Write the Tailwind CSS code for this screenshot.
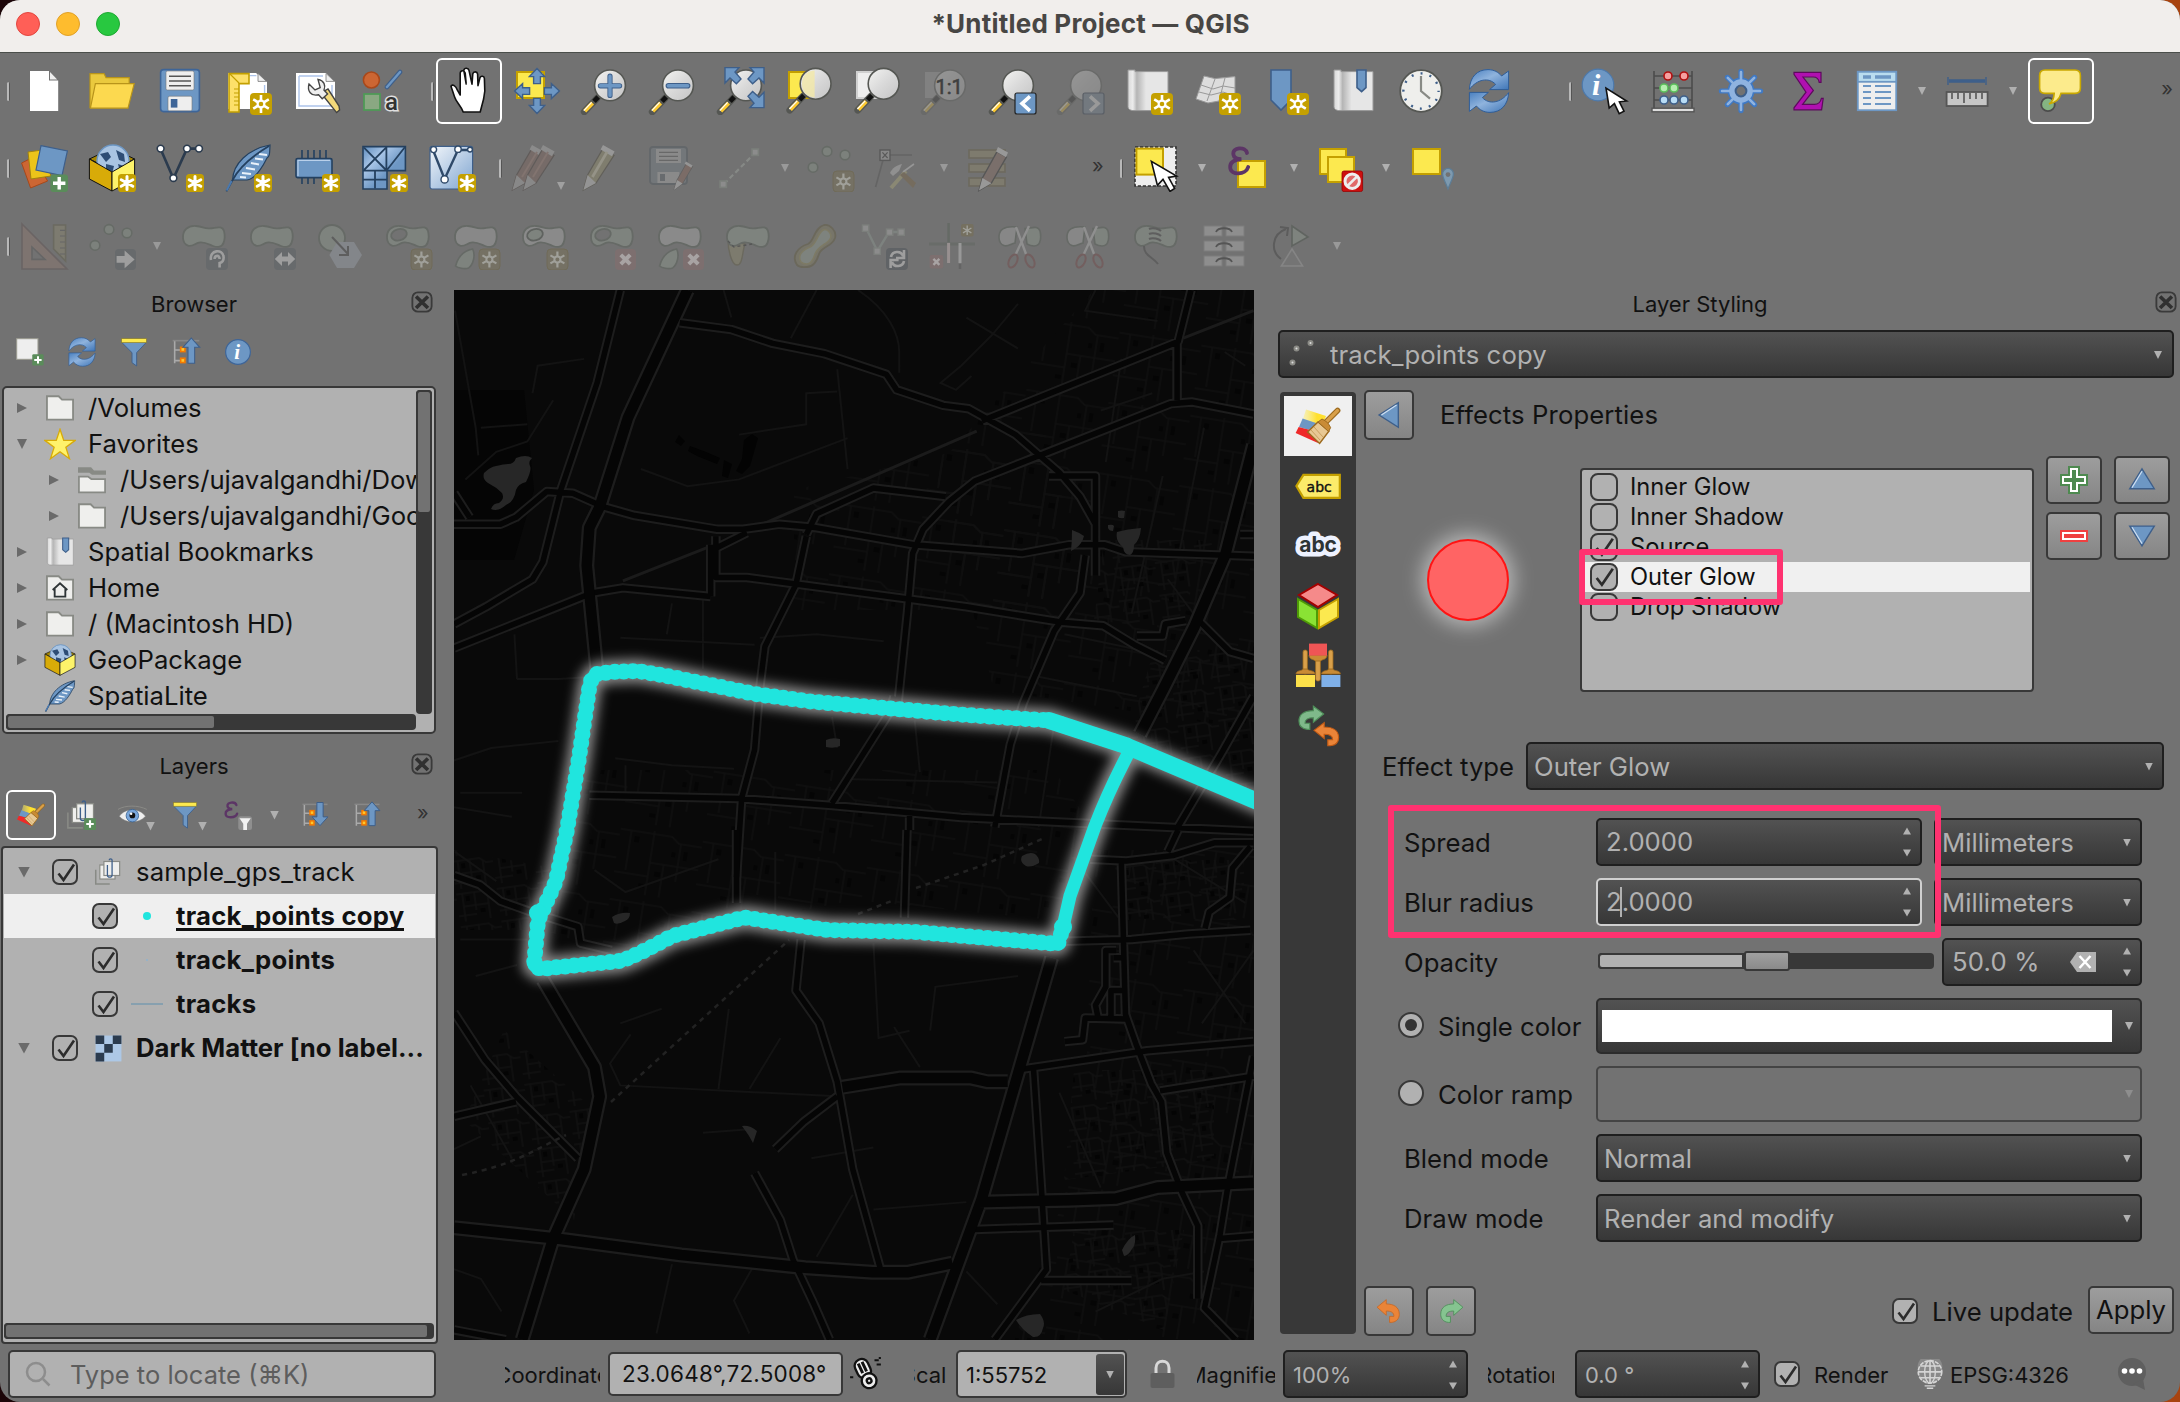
<!DOCTYPE html>
<html lang="en">
<head>
<meta charset="utf-8">
<title>QGIS</title>
<script src="https://cdn.jsdelivr.net/npm/@tailwindcss/browser@4"></script>
</head>
<body class="w-[2180px] h-[1402px] overflow-hidden bg-[linear-gradient(90deg,#1c0508_50%,#a8430f_50%)]">

<!-- Icon library -->
<svg class="absolute w-0 h-0" aria-hidden="true">
  <defs>
    <linearGradient id="gLens" x1="0" y1="0" x2="1" y2="1"><stop offset="0" stop-color="#f4f4f2"/><stop offset=".5" stop-color="#d9d9d9"/><stop offset="1" stop-color="#c4c4c4"/></linearGradient>
    <linearGradient id="gBlue" x1="0" y1="0" x2="1" y2="1"><stop offset="0" stop-color="#4a80c0"/><stop offset=".45" stop-color="#8fb3dd"/><stop offset="1" stop-color="#3f76b8"/></linearGradient>
    <linearGradient id="gPale" x1="0" y1="0" x2="1" y2="1"><stop offset="0" stop-color="#f2f6fa"/><stop offset="1" stop-color="#7fa5d0"/></linearGradient>
    <linearGradient id="gRoll" x1="0" y1="0" x2="1" y2="0"><stop offset="0" stop-color="#d8d8d8"/><stop offset=".12" stop-color="#ececec"/><stop offset=".22" stop-color="#b5b5b5"/><stop offset=".45" stop-color="#e6e6e6"/><stop offset="1" stop-color="#e6e6e6"/></linearGradient>
    <linearGradient id="gFlag" x1="0" y1="0" x2="1" y2="0"><stop offset="0" stop-color="#ffef6a" stop-opacity=".4"/><stop offset=".6" stop-color="#ffe02e"/></linearGradient>
    <linearGradient id="gMesh" x1="0" y1="0" x2="1" y2="1"><stop offset="0" stop-color="#5f8cbd"/><stop offset=".3" stop-color="#a9c6e8"/><stop offset=".6" stop-color="#6d97c4"/><stop offset="1" stop-color="#6d97c4"/></linearGradient>

    <g id="star"><rect x="13" y="13" width="11" height="11" rx="2" fill="#c4a000"/><path d="M18.500 14v9M14.600 16.200l7.800 4.600M14.600 20.800l7.800-4.600" stroke="#fff" stroke-width="1.300"/><circle cx="18.500" cy="18.500" r="1.700" fill="#c4a000" stroke="#fff" stroke-width="1.100"/></g>
    <g id="starS"><rect x="15" y="15" width="9" height="9" rx="1.800" fill="#c4a000"/><path d="M19.500 16.300v6.400M16.600 17.900l5.800 3.200M16.600 21.100l5.800-3.200" stroke="#fff" stroke-width="1.500" stroke-linecap="round"/></g>
    <g id="glass"><path d="M8.200 15.400L1.600 22.400" stroke="#555753" stroke-width="3.400" stroke-linecap="round"/><path d="M8.600 15L6.500 17.200" stroke="#111" stroke-width="2.400"/><path d="M5.800 18L1.900 22.100" stroke="#fcc92f" stroke-width="2"/><path d="M5.300 17.700L1.400 21.800" stroke="#fff" stroke-width=".6"/><circle cx="14.500" cy="9.200" r="7.700" fill="url(#gLens)" stroke="#555753" stroke-width=".8"/></g>
    <g id="cursor"><path d="M12.500 10.500l1.600 10 2.600-2.200 2.400 5 2.400-1.200-2.300-4.700 3.600-.4z" fill="#fff" stroke="#111" stroke-width=".8"/></g>

    <symbol id="new" viewBox="0 0 24 24"><path d="M5 2h9.500v4.700h4.600V22H5z" fill="#fff"/><path d="M15 2.500l3.600 3.700H15z" fill="#eee"/></symbol>
    <symbol id="open" viewBox="0 0 24 24"><path d="M1 20.500V3.300h7l1 2h11.600v3" fill="#eac93e" stroke="#b8941a" stroke-width=".6"/><path d="M3.700 8.300h19.400L20 20.600H1.200z" fill="#fcd94f" stroke="#b8941a" stroke-width=".6"/></symbol>
    <symbol id="save" viewBox="0 0 24 24"><rect x="2.300" y="1.300" width="19.400" height="21" rx="1.500" fill="#6d97c4" stroke="#3e6598" stroke-width=".8"/><rect x="5" y="2" width="14" height="9.500" rx=".8" fill="#eee" stroke="#777" stroke-width=".3"/><path d="M6.500 4.600h11M6.500 7h11M6.500 9.400h11" stroke="#555" stroke-width=".8"/><rect x="6" y="14.600" width="12" height="7.300" rx=".8" fill="#eee" stroke="#777" stroke-width=".3"/><rect x="7.400" y="16" width="3.300" height="4.300" fill="#3e6598"/></symbol>
    <symbol id="newlayout" viewBox="0 0 24 24"><path d="M2 3h14l5.500 4.500V21H2z" fill="#fff"/><path d="M9 4.300h7.200M20.300 9v8" stroke="#adc4ea" stroke-width=".7"/><path d="M17 3.200l4.200 4H17z" fill="#eee" stroke="#777" stroke-width=".4"/><path d="M2.500 3.300h10v5H7.500V22.500h-5z" fill="#fde06a" stroke="#c4a000" stroke-width=".8"/><path d="M5 11h2.500M5 13h2.500M5 15h2.500M5 17h2.500M5 19h2.500M3 3.500l4.500 4.500" stroke="#c4a000" stroke-width=".6"/><use href="#star"/></symbol>
    <symbol id="manager" viewBox="0 0 24 24"><path d="M2 3h15l4.500 4.500V21H2z" fill="#fff"/><path d="M3.500 4.500h12M3.500 4.500v15h16.500V9" fill="none" stroke="#adc4ea" stroke-width=".7"/><path d="M17 3.200l4.200 4H17z" fill="#eee" stroke="#777" stroke-width=".4"/><path d="M14.500 13l7.800 9.800 1.500-1.300-.3-2-5.500-8.500z" fill="#f3d97a" stroke="#444" stroke-width=".7"/><path d="M8.500 8.500l3 3 2.600-1.200L13 6.200c3 .5 4 3 3 5.300l1.800 2-2.700 2.400-1.800-2C9.500 14.800 7.500 12 8.500 8.500z" fill="#eee" stroke="#444" stroke-width=".7"/></symbol>
    <symbol id="style" viewBox="0 0 24 24"><circle cx="5.700" cy="6.500" r="4" fill="#cc6633" stroke="#a8481a" stroke-width=".8"/><path d="M13.500 10l6.500-7.500" stroke="#3e5f8a" stroke-width="2.400" stroke-linecap="round"/><path d="M13.500 10l6.500-7.500" stroke="#6d97c4" stroke-width="1.200" stroke-linecap="round"/><rect x="2" y="13.500" width="8" height="8" fill="#8aa882" stroke="#4f9a57" stroke-width=".9"/><text x="12.500" y="21.500" font-family="Roboto" font-size="12" font-weight="500" fill="#333" stroke="#e0e0e0" stroke-width="1.500" paint-order="stroke">a</text></symbol>
    <symbol id="hand" viewBox="0 0 24 24"><path d="M8.500 22.500c-1-3-3.600-5-4.300-7.500L2.400 9.600c.8-1.300 2.400-.2 3.200 2L7 14V3c.2-1.400 2-1.500 2.500 0L10 8.500 8.800 1.700c.3-1.500 2.300-1.300 2.600 0L12.900 8.600l.4-5.200c.4-1.400 2.200-1.200 2.400.1l.2 5.800 1-4c.5-1.100 2.200-.8 2.200.5l.2 6.200-.6 4-1.700 6.500z" transform="translate(.6 0)" fill="#fff" stroke="#111" stroke-width=".8" stroke-linejoin="round"/></symbol>
    <symbol id="pan" viewBox="0 0 24 24"><rect x="2" y="2.500" width="13.500" height="13" fill="#fce94f" stroke="#c4a000"/><path d="M12 .8l3.800 4h-2.100v3.500h-3.400V4.800H8.200zM12 23.200l-3.800-4h2.100v-3.500h3.400v3.500h2.100zM.8 12l4-3.700v2.100h3.500v3.300H4.800v2.100zM23.200 12l-4-3.700v2.100h-3.500v3.300h3.500v2.100z" fill="#6d97c4" stroke="#3e5f8a" stroke-width=".7"/></symbol>
    <symbol id="zoomin" viewBox="0 0 24 24"><use href="#glass"/><path d="M14.500 4.600v9.600M9.700 9.400h9.600" stroke="#3e5f8a" stroke-width="2.600" stroke-linecap="round"/><path d="M14.500 4.600v9.600M9.700 9.400h9.600" stroke="#6d97c4" stroke-width="1.700" stroke-linecap="round"/></symbol>
    <symbol id="zoomout" viewBox="0 0 24 24"><use href="#glass"/><path d="M9.700 9.400h9.600" stroke="#3e5f8a" stroke-width="2.800" stroke-linecap="round"/><path d="M9.700 9.400h9.600" stroke="#6d97c4" stroke-width="1.700" stroke-linecap="round"/></symbol>
    <symbol id="zoomfull" viewBox="0 0 24 24"><use href="#glass"/><path d="M4 .3h7L9 2.500l3 3.500-2.300 2.400L6.500 5.500 4 8zM23.500.3h-7l2 2.200-3 3.500 2.300 2.400L21 5.500 23.500 8zM23.500 20.300h-7l2-2.200-3-3.500 2.300-2.400 3.200 2.900 2.500-2.500z" fill="#6d97c4" stroke="#3e5f8a" stroke-width=".7"/></symbol>
    <symbol id="zoomsel" viewBox="0 0 24 24"><rect x="2" y="2.500" width="12" height="13" fill="#fce94f" stroke="#c4a000"/><g transform="translate(.8 -.8)"><use href="#glass"/><path d="M14 2.500V16c-4.500-.2-6.300-3.500-6.300-6.800S9.500 2.700 14 2.500z" fill="#f2e8a8" opacity=".8"/></g></symbol>
    <symbol id="zoomlayer" viewBox="0 0 24 24"><rect x="2" y="2.500" width="12" height="13" fill="#eee" stroke="#d0d0d0"/><g transform="translate(.8 -.8)"><use href="#glass"/></g></symbol>
    <symbol id="zoomnative" viewBox="0 0 24 24"><g opacity=".28"><rect x="2" y="2.500" width="10" height="13" fill="#aaa"/><use href="#glass"/></g><text x="7.200" y="13.300" font-family="Roboto" font-size="10" fill="#3f3f3f" stroke="#3f3f3f" stroke-width=".3">1:1</text></symbol>
    <symbol id="zoomlast" viewBox="0 0 24 24"><use href="#glass"/><rect x="13" y="13" width="10.500" height="10.500" rx="1" fill="#6d97c4" stroke="#222" stroke-width=".6"/><path d="M20.500 14.700l-4 3.600 4 3.600" fill="none" stroke="#fff" stroke-width="1.800"/></symbol>
    <symbol id="zoomnext" viewBox="0 0 24 24"><g opacity=".28"><use href="#glass"/></g><rect x="13" y="13" width="10.500" height="10.500" rx="1" fill="#73797f" stroke="#5a5f66" stroke-width=".6"/><path d="M16.500 14.700l4 3.600-4 3.600" fill="none" stroke="#999" stroke-width="1.800"/></symbol>
    <symbol id="newmap" viewBox="0 0 24 24"><path d="M1.500 1.500h3.500v.8h16.500v19.500H4.500c-2 0-3-.8-3-2z" fill="url(#gRoll)" stroke="#999" stroke-width=".5"/><use href="#star"/></symbol>
    <symbol id="new3d" viewBox="0 0 24 24"><path d="M5.500 4.500l5.500 1.300 10-1V19l-8-2-5.500 1-6-2z" fill="#ddd" stroke="#999" stroke-width=".5"/><path d="M4 9l6 2 5-1.500 6 1M3 12.500l6 1.500 6-1.500 6 2M11 6l-4 11M16 5.500L13 17" fill="none" stroke="#999" stroke-width=".5"/><use href="#star"/></symbol>
    <symbol id="newbm" viewBox="0 0 24 24"><path d="M5 1.500h10v15l-5 5-5-5z" fill="#6d97c4" stroke="#3e5f8a" stroke-width=".8"/><use href="#star"/></symbol>
    <symbol id="bms" viewBox="0 0 24 24"><path d="M2.500 1.500H6v.8h16v19.500H5.500c-2 0-3-.8-3-2z" fill="url(#gRoll)" stroke="#999" stroke-width=".5"/><path d="M14 1.500h4.500v8.800l-2.200 2-2.300-2z" fill="#6d97c4" stroke="#3e5f8a" stroke-width=".8"/></symbol>
    <symbol id="clock" viewBox="0 0 24 24"><circle cx="12" cy="12" r="10.400" fill="#efefec" stroke="#555753" stroke-width=".9"/><circle cx="12" cy="12" r="8.800" fill="none" stroke="#3e5f8a" stroke-width="1.200" stroke-dasharray="1 3.608" stroke-dashoffset=".5"/><path d="M12 4.500V12l4.500 3.800" fill="none" stroke="#888a85" stroke-width="1.100"/></symbol>
    <symbol id="refresh" viewBox="0 0 24 24"><path d="M2.200 11.200C2.500 5 6 1.300 11.500 1.300c3 0 5.200 1.300 6.800 3.200l3.500-2.500v9.300h-9.500l3-2.600C12 5 6 6 2.200 11.200z" fill="url(#gBlue)" stroke="#2f5d98" stroke-width=".5"/><path d="M21.800 12.800C21.500 19 18 22.700 12.500 22.700c-3 0-5.200-1.300-6.800-3.200l-3.500 2.700v-9.500h9.500l-3 2.600c3.300 3.700 9.300 2.700 13.100-2.500z" fill="url(#gBlue)" stroke="#2f5d98" stroke-width=".5"/></symbol>
    <symbol id="info" viewBox="0 0 24 24"><circle cx="12" cy="12" r="10.600" fill="#6d97c4" stroke="#3e6598" stroke-width="1"/><text x="8.800" y="18" font-family="Liberation Serif" font-style="italic" font-weight="bold" font-size="18" fill="#fff">i</text></symbol>
    <symbol id="identify" viewBox="0 0 24 24"><circle cx="8.500" cy="9" r="7.900" fill="#6d97c4" stroke="#4d79ab" stroke-width=".6"/><text x="5.500" y="14" font-family="Liberation Serif" font-style="italic" font-weight="bold" font-size="15" fill="#fff">i</text><use href="#cursor"/></symbol>
    <symbol id="abacus" viewBox="0 0 24 24"><path d="M2.500 2v18.500M21.500 2v18.500M2.500 4.500h19M2.500 10.500h19M2.500 16.500h19" stroke="#4c4c4c" stroke-width=".8"/><rect x="1.500" y="20.600" width="21" height="1.800" fill="#ddd" stroke="#555" stroke-width=".7"/><g stroke-width=".8"><g fill="#f5a0a0" stroke="#b01010"><circle cx="9.500" cy="4.500" r="2"/><circle cx="17.500" cy="4.500" r="2"/></g><g fill="#b6efb0" stroke="#5cc05c"><circle cx="7.500" cy="10.500" r="2"/><circle cx="12.500" cy="10.500" r="2"/></g><g fill="#b8dcf5" stroke="#3e5f8a"><circle cx="7.500" cy="16.500" r="2"/><circle cx="12.500" cy="16.500" r="2"/><circle cx="17.500" cy="16.500" r="2"/></g></g></symbol>
    <symbol id="gear" viewBox="0 0 24 24"><path d="M12 2.200v19.600M2.200 12h19.600M5.200 5.200l13.600 13.600M18.800 5.200L5.200 18.800" stroke="#3f79c4" stroke-width="2.600" stroke-linecap="round"/><circle cx="12" cy="12" r="6.300" fill="#8fb3e0" stroke="#3f79c4" stroke-width=".8"/><path d="M12 2.500v19M2.500 12h19M5.400 5.400l13.200 13.200M18.600 5.400L5.400 18.600" stroke="#8fb3e0" stroke-width="1.300" stroke-linecap="round"/><circle cx="12" cy="12" r="2.700" fill="#727272" stroke="#3e5f8a"/></symbol>
    <symbol id="sigma" viewBox="0 0 24 24"><path d="M4.500 2.700H18v5h-.9c-.3-2-1.100-2.700-3-2.700H9l5.200 6.700-5.400 7h5.900c2 0 3-.8 3.500-3h.9l-.8 5.700H4.500v-1l6-7.800-6-8.900z" fill="#b010b0" stroke="#5d0a5d" stroke-width=".6"/></symbol>
    <symbol id="table" viewBox="0 0 24 24"><rect x="2.400" y="2.400" width="19.200" height="19.200" fill="#eee" stroke="#6d97c4" stroke-width=".9"/><rect x="2.400" y="2.400" width="19.200" height="5" fill="#b9dcef" stroke="#6d97c4" stroke-width=".9"/><path d="M5 5h4M11 5h8" stroke="#6d97c4" stroke-width="1.800"/><path d="M5 9.500h4M11 9.500h8M5 12.500h4M11 12.500h8M5 15.500h4M11 15.500h8M5 18.500h4M11 18.500h8" stroke="#6d97c4" stroke-width=".9"/></symbol>
    <symbol id="measure" viewBox="0 0 24 24"><path d="M2.500 5v4M21.500 5v4" stroke="#3e5f8a" stroke-width=".7"/><path d="M3 7h18" stroke="#3e5f8a" stroke-width="1.700"/><rect x="1.800" y="12.500" width="20.500" height="7" fill="#c6c6c6" stroke="#555" stroke-width=".9"/><path d="M4.500 13v3M7.500 13v3M10.500 13v5M13.500 13v3M16.500 13v3M19.500 13v3" stroke="#555" stroke-width=".8"/></symbol>
    <symbol id="tips" viewBox="0 0 24 24"><circle cx="6" cy="18.700" r="3.400" fill="#85b582" stroke="#4c4c4c" stroke-width=".9"/><path d="M4.500 1.500h15c1.800 0 2.700 1 2.700 2.700v6.300c0 1.700-.9 2.700-2.700 2.700h-7c-.6 2.700-2.300 4.500-6 5.300 1.800-1 2.500-2.800 2.600-5.300H4.500c-1.800 0-2.700-1-2.700-2.700V4.200c0-1.700.9-2.700 2.700-2.700z" fill="#fceb8c" stroke="#c9a800" stroke-width=".8"/></symbol>

    <symbol id="dsm" viewBox="0 0 24 24"><path d="M.8 9.500l6-3 7 12-8.500 3.500z" fill="#cc6633" stroke="#a8481a" stroke-width=".5"/><path d="M4 4l7-1 4.500 13-10 1.500z" fill="#ecc41a" stroke="#a08210" stroke-width=".5"/><path d="M10.500.8L23.700 3.500 21 15.800 8 13z" fill="#6d97c4" stroke="#3e5f8a" stroke-width=".6"/><rect x="15.200" y="15.200" width="8.800" height="8.800" rx="1.500" fill="#5a8c5a"/><path d="M19.600 16.500v6.200M16.500 19.600h6.200" stroke="#fff" stroke-width="1.700"/></symbol>
    <symbol id="gpkgp" viewBox="0 0 24 24"><path d="M.7 7.500L7 4.500h10l6.300 3L12 13z" fill="#a58500" stroke="#111" stroke-width=".5"/><circle cx="12.500" cy="8.500" r="8" fill="#a9c4e2" stroke="#6d97c4" stroke-width=".7"/><path d="M6 5l4-1 1.500 2.500L9 9zM14 3l4 2 .5 4-3-1zM9 10l4 1-1 4-3-2zM15 10l3 1-2 3z" fill="#2e4d75"/><path d="M.7 7.500L12 14v9.500L.7 17.500z" fill="#d8ab08" stroke="#111" stroke-width=".5"/><path d="M23.300 7.500L12 14v9.500l11.300-6z" fill="#fdf36a" stroke="#111" stroke-width=".5"/></symbol>
    <symbol id="gpkg" viewBox="0 0 24 24"><use href="#gpkgp"/><use href="#starS"/></symbol>
    <symbol id="shp" viewBox="0 0 24 24"><path d="M2.200 2.300l6.500 15L15.500 2.300h6.200" fill="none" stroke="#2b3b4e" stroke-width="1.300"/><g fill="#fff" stroke="#2b3b4e" stroke-width=".8"><circle cx="2.300" cy="2.300" r="1.700"/><circle cx="8.700" cy="17" r="1.700"/><circle cx="15.500" cy="2.300" r="1.700"/><circle cx="21.500" cy="2.300" r="1.700"/></g><use href="#starS"/></symbol>
    <symbol id="featherp" viewBox="0 0 24 24"><path d="M23 .5c-.2 4 0 5.500-1.500 6.500-2 4-6 10.500-10 11H4.300C4.500 10 12 2.500 23 .5z" fill="#6d97c4" stroke="#24405f" stroke-width=".6"/><path d="M9 14.500l4.500.5M11 12l4.500.800M13.500 9.500l4 .800M15.500 7.300l4 .500M17.500 5l4 .500M8 16.500l3 .2" stroke="#eaf2fa" stroke-width="1"/><path d="M22.500 1C15 5.500 8 11 4.300 18L1.200 23.700" fill="none" stroke="#24405f" stroke-width=".9"/><path d="M3.800 18.500L1.300 23.300" stroke="#4b7ab0" stroke-width="1"/></symbol>
    <symbol id="feather" viewBox="0 0 24 24"><use href="#featherp"/><use href="#starS"/></symbol>
    <symbol id="mem" viewBox="0 0 24 24"><path d="M5 3v4M8 3v4M11 3v4M14 3v4M17 3v4M5 17v3M8 17v3M11 17v3" stroke="#24405f" stroke-width=".8"/><rect x="2" y="7.300" width="18" height="9.500" rx=".8" fill="#6d97c4" stroke="#24405f" stroke-width=".8"/><path d="M3 16V8.200h16" fill="none" stroke="#b9d0ea" stroke-width=".6"/><use href="#starS"/></symbol>
    <symbol id="mesh" viewBox="0 0 24 24"><path d="M1.500 1.300h21.200v12H13.500v9.200h-12z" fill="url(#gMesh)" stroke="#24405f" stroke-width=".8"/><path d="M2 1.800L13 13M13 1.800L2 13M13.200 1.300v12M22.500 1.500L13.500 13M1.500 13.300h12M7.500 13.300v9M1.500 17.800h12" stroke="#24405f" stroke-width=".9"/><use href="#starS"/></symbol>
    <symbol id="gpx" viewBox="0 0 24 24"><rect x="1" y="1.200" width="21.300" height="21.300" rx="1" fill="url(#gPale)" stroke="#3e5f8a" stroke-width=".6"/><path d="M2.500 3l5.800 14.500L15 3h7" fill="none" stroke="#2f4a6a" stroke-width="1.200"/><g fill="#fff" stroke="#2f4a6a" stroke-width=".7"><circle cx="2.800" cy="2.800" r="1.500"/><circle cx="8.300" cy="17.700" r="1.800"/><circle cx="15" cy="2.600" r="1.600"/><circle cx="21" cy="2.800" r="1.200"/></g><use href="#starS"/></symbol>

    <!-- Digitizing, disabled -->
    <g id="penG"><path d="M1.700 23L3.800 15.500 11.500 2.200l5.500 3.500L8 19.500z" fill="#776b67" stroke="#5f5a58" stroke-width=".6"/><path d="M11.500 .5l5.800 3.300-1.300 2.300-5.700-3.300z" fill="#8e8e8e"/><path d="M1.700 23L3.800 15.500l4.200 4z" fill="#8b8b8b"/><path d="M6.500 16.500L14 4" stroke="#847570" stroke-width="1"/></g>
    <symbol id="pencils" viewBox="0 0 24 24"><g opacity=".9"><use href="#penG" x="-1.500"/><use href="#penG" x="4"/></g></symbol>
    <symbol id="pencil" viewBox="0 0 24 24"><path d="M1.700 23L3.800 15.500 11.500 2.200l5.500 3.500L8 19.500z" fill="#7f7d6e" stroke="#62605a" stroke-width=".6"/><path d="M11.500 .5l5.800 3.300-1.300 2.300-5.700-3.300z" fill="#979797"/><path d="M1.700 23L3.800 15.500l4.200 4z" fill="#949494"/><path d="M6.200 16.500L13.500 4" stroke="#959387" stroke-width="1.400"/></symbol>
    <symbol id="saveedit" viewBox="0 0 24 24"><rect x="1" y="1.500" width="18.500" height="18.500" rx="1.500" fill="#73777a" stroke="#63676a" stroke-width=".9"/><rect x="4" y="2.500" width="12.500" height="7" fill="#8a8a8a"/><path d="M5.500 4.200h9.500M5.500 6.200h9.500M5.500 8.200h9.500" stroke="#686868" stroke-width=".7"/><rect x="4.700" y="14" width="11" height="5.500" fill="#8a8a8a"/><rect x="6" y="15" width="2.500" height="3.500" fill="#686b6e"/><path d="M13 23l1.500-5 4.800-8.500 3 1.800-5 8.500z" fill="#7b6c67" stroke="#606060" stroke-width=".4"/><path d="M19 8.700l3.300 2-.7 1.200-3.300-2zM13 23l1.500-5 2.800 1.800z" fill="#959595"/></symbol>
    <symbol id="line" viewBox="0 0 24 24"><path d="M4 20L20 4" stroke="#868986" stroke-width="1.100" stroke-dasharray="2.500 1.500"/><g fill="#8c8c8c" stroke="#7b7f7b" stroke-width=".8"><rect x="2" y="18.500" width="3.200" height="3.200"/><rect x="18" y="2.500" width="3.200" height="3.200"/></g></symbol>
    <g id="ptsG" fill="#7c817c" stroke="#666b66" stroke-width=".8"><circle cx="10.500" cy="3.700" r="2.400"/><circle cx="19.500" cy="5.500" r="2.400"/><circle cx="3.500" cy="11.700" r="2.400"/></g>
    <g id="bStar"><rect x="13.500" y="13.500" width="10.500" height="10.500" rx="2" fill="#757164" stroke="#706b58" stroke-width=".5"/><path d="M18.700 14.700v8M15.200 16.700l7 4M15.200 20.700l7-4" stroke="#a0a09a" stroke-width="1.100"/><circle cx="18.700" cy="18.700" r="1.500" fill="#757164" stroke="#a0a09a" stroke-width="1"/></g>
    <g id="bX"><rect x="13.500" y="13.500" width="10.500" height="10.500" rx="2" fill="#7d6f6f"/><path d="M16.400 16.400l4.700 4.700M21.100 16.400l-4.700 4.700" stroke="#a8a3a3" stroke-width="2"/></g>
    <symbol id="addpts" viewBox="0 0 24 24"><use href="#ptsG"/><use href="#bStar"/></symbol>
    <symbol id="vertex" viewBox="0 0 24 24"><path d="M7 5.500h12M4.500 8L.8 21.500" stroke="#646464" stroke-width=".8"/><rect x="3" y="3" width="5" height="5.200" fill="#888" stroke="#5a5a5a" stroke-width=".7"/><path d="M4.200 4.200l2.600 2.800M6.800 4.200L4.200 7" stroke="#5a5a5a" stroke-width=".6"/><path d="M8.500 22l7.500-8.500" stroke="#8a8874" stroke-width="2"/><path d="M14.500 14L20 10" stroke="#969696" stroke-width=".8"/><path d="M8 14.500c1-2.500 3.500-4 6-4.500l-1.500 3.500-3 2.500z" fill="#909090"/><path d="M13 15.500l2-1.500 6 5.500-1.500 2.500z" fill="#756c5e"/></symbol>
    <symbol id="multi" viewBox="0 0 24 24"><g fill="#7e7b6e" stroke="#6d6a5e" stroke-width=".8"><rect x="1.500" y="3" width="18" height="4"/><rect x="1.500" y="10" width="18" height="4"/><rect x="1.500" y="17" width="18" height="4"/></g><path d="M6.500 23.200L8.200 17 15.500 3.800l4.700 2.700-7.500 13z" fill="#7a6f6b" stroke="#565656" stroke-width=".7"/><path d="M16 1.500l5 2.800-1 2.300-5-2.800zM6.500 23.200L8.200 17l4.500 2.600z" fill="#989898"/></symbol>
    <symbol id="select" viewBox="0 0 24 24"><rect x="1.500" y="1.500" width="20.500" height="19.500" fill="#eee" stroke="#333" stroke-width=".8" stroke-dasharray="1.600 .9"/><rect x="2.200" y="2.300" width="13.300" height="13" fill="#fce94f" stroke="#c4a000"/><g transform="translate(-2.500 -1.500)"><path d="M12.200 10.200l3 12 2.800-3 3.500 6 2.300-1.500-3-5.500 4-.7z" fill="#fff" stroke="#111" stroke-width=".8"/></g></symbol>
    <symbol id="selexp" viewBox="0 0 24 24"><rect x="7" y="8.500" width="13.500" height="13" fill="#fce94f" stroke="#c4a000"/><path d="M11.500 4.500c-.8-3.500-7.500-3-6.800.8.300 1.700 1.800 2.300 4 2.300-3.500.3-5.800 1.600-5.600 4.200.3 4 7.800 3.800 9-.3" fill="none" stroke="#5c3566" stroke-width="1.900" stroke-linecap="round"/></symbol>
    <symbol id="desel" viewBox="0 0 24 24"><rect x="2" y="2.500" width="13" height="12.500" fill="#fce94f" stroke="#c4a000"/><rect x="6" y="6.500" width="13" height="12.500" fill="#fce94f" stroke="#c4a000"/><rect x="13" y="13.500" width="10.300" height="10.300" rx="1" fill="#cc1010" stroke="#900" stroke-width=".4"/><circle cx="18.100" cy="18.600" r="3.600" fill="#e06a6a" stroke="#eee" stroke-width="1.500"/><path d="M15.700 21l4.900-4.800" stroke="#eee" stroke-width="1.300"/></symbol>
    <symbol id="selloc" viewBox="0 0 24 24"><rect x="2.500" y="2.500" width="13.500" height="12.500" fill="#fce94f" stroke="#c4a000"/><path d="M20 22.500c-1.500-4-2.700-5.500-2.700-7.600a2.700 2.700 0 0 1 5.400 0c0 2.100-1.200 3.600-2.700 7.600z" fill="#7d9ab0" stroke="#5d7d96" stroke-width=".6"/><circle cx="20" cy="15.300" r="1.200" fill="#727272"/></symbol>

    <!-- Advanced digitizing, disabled -->
    <path id="blob" d="M1.500 8C1.200 4 4 1.700 8 2c3.500.3 4 1.500 7 1.200C18 3 21 1.500 22 4.500c.5 2 .5 4-.2 5.800-.8 2.300-3 2.600-5.300 1.700C14 11 12 9.800 9.500 10.300 7.500 10.800 6 12.500 4 11.800 2.300 11.200 1.600 9.800 1.500 8z" stroke="#666a66" stroke-width=".9"/>
    <symbol id="tri" viewBox="0 0 24 24"><path d="M16.800 1.500h6v18l-6-6z" fill="#7d7b70" stroke="#6b6a60" stroke-width=".8"/><path d="M20 4.200h2.500M20 7h2.500M20 10h2.500M20 13h2.500M20 16h2.500" stroke="#666" stroke-width=".6"/><path d="M1 1l22.500 22.500H1z" fill="#7e7470" stroke="#6a6464" stroke-width=".8"/><path d="M6 12.500l6.500 6.200H6z" fill="#727272" stroke="#666" stroke-width=".8"/></symbol>
    <symbol id="movef" viewBox="0 0 24 24"><use href="#ptsG"/><rect x="13.500" y="13.500" width="10.500" height="10.500" rx="2" fill="#676a6c"/><path d="M14.300 17h4v-2.700l5 4.400-5 4.400v-2.700h-4z" fill="#9e9e9e"/></symbol>
    <symbol id="rot" viewBox="0 0 24 24"><use href="#blob" fill="#7e837e"/><rect x="13" y="13" width="11" height="11" rx="2" fill="#676a6c"/><path d="M15.500 19c-1-5 6-6 6.300-1.500.1 1.500-.8 2.700-2 3v2.300M17.300 18.500c0-2 2.500-2.200 2.500 0" fill="none" stroke="#9e9e9e" stroke-width="1.300"/></symbol>
    <symbol id="scale" viewBox="0 0 24 24"><use href="#blob" fill="#7e837e"/><rect x="13" y="13" width="11" height="11" rx="2" fill="#676a6c"/><path d="M13.400 18.500l3.600-3.500v2.300h3V15l3.600 3.500L20 22v-2.300h-3V22z" fill="#9e9e9e"/></symbol>
    <symbol id="simp" viewBox="0 0 24 24"><circle cx="8" cy="8" r="6.500" fill="#7e837e" stroke="#666a66" stroke-width=".9"/><path d="M10.500 10h8.500l4 6.500-4 6.500h-8.500l-3.800-6.500z" fill="#83868a"/><path d="M8 7.500l8 8.500M16 12v4.500h-4.500" fill="none" stroke="#5e5e5e" stroke-width="1"/></symbol>
    <symbol id="ring" viewBox="0 0 24 24"><use href="#blob" fill="#7e837e"/><ellipse cx="7.500" cy="6.500" rx="4" ry="2.800" transform="rotate(-15 7 6.500)" fill="#727272" stroke="#666a66" stroke-width=".9"/><use href="#bStar"/></symbol>
    <symbol id="part" viewBox="0 0 24 24"><use href="#blob" fill="#888"/><path d="M1.800 22c1-4 3.500-7.500 8.500-8.500 1.500 3 .5 7.500-2 9.500-2 .7-5.500 0-6.500-1z" fill="#7e837e" stroke="#666a66" stroke-width=".8"/><use href="#bStar"/></symbol>
    <symbol id="fill" viewBox="0 0 24 24"><use href="#blob" fill="#8a8a8a"/><ellipse cx="7.500" cy="6.500" rx="4" ry="2.800" transform="rotate(-15 7 6.500)" fill="#7e837e" stroke="#5f625f" stroke-width=".9"/><use href="#bStar"/></symbol>
    <symbol id="delring" viewBox="0 0 24 24"><use href="#blob" fill="#7e837e"/><ellipse cx="7.500" cy="6.500" rx="4" ry="2.800" transform="rotate(-15 7 6.500)" fill="#727272" stroke="#666a66" stroke-width=".9"/><use href="#bX"/></symbol>
    <symbol id="delpart" viewBox="0 0 24 24"><use href="#blob" fill="#8a8a8a"/><path d="M1.800 22c1-4 3.500-7.500 8.500-8.500 1.500 3 .5 7.500-2 9.500-2 .7-5.500 0-6.500-1z" fill="#7e837e" stroke="#666a66" stroke-width=".8"/><use href="#bX"/></symbol>
    <symbol id="reshape" viewBox="0 0 24 24"><path d="M2 9c0 4 1.500 12.500 4.500 12.500S9 15 10.500 11z" fill="#7d7b6e" stroke="#6b695e" stroke-width=".7"/><use href="#blob" fill="#7e837e"/><path d="M2 9.500l3 3 9-1.500" fill="none" stroke="#555" stroke-width=".7" stroke-dasharray="1.500 1.500"/></symbol>
    <symbol id="offset" viewBox="0 0 24 24"><path d="M2.500 21.500C-.5 17 3 12.500 8 11c3-1 3-8 8-9.500 3-.5 6.500 3 5.500 6.500-1.500 4.500-6.500 4-8 8-1.500 5-3.500 6.500-6 6.500-2 .2-4 0-5-1z" fill="#777569" stroke="#6b685b" stroke-width=".9"/><path d="M4.500 20c-2-3 .5-6 4.500-7.500 3.500-1.500 4-8 7-8.700 2-.3 4 2 3.300 4.200-1.300 3.200-6 3.500-7.800 8-1.200 4-2.500 5-4 5-1.300 0-2.300-.2-3-1z" fill="#7e837e" stroke="#7d7a65" stroke-width=".8"/></symbol>
    <symbol id="revl" viewBox="0 0 24 24"><path d="M3 3l5.700 11.500L14.500 5H21" fill="none" stroke="#7d827f" stroke-width="1.200"/><g fill="#8c8c8c" stroke="#7c7f7c" stroke-width=".7"><rect x="1.200" y="1.500" width="3.200" height="3.200"/><rect x="13.200" y="3.500" width="3.200" height="3.200"/><rect x="19" y="3.500" width="3.200" height="3.200"/><rect x="7" y="13" width="3.200" height="3.200"/></g><rect x="13" y="13" width="11" height="11" rx="2" fill="#606366"/><path d="M15.500 17.500c.5-3 5-3.500 6-.500M22 14v4h-4M22 19.500c-.5 3-5 3.500-6 .500M15.300 23v-4h4" fill="none" stroke="#9e9e9e" stroke-width="1.300"/></symbol>
    <symbol id="trim" viewBox="0 0 24 24"><path d="M.5 11h23" stroke="#696c69" stroke-width="1.500"/><path d="M10.300.5V10" stroke="#656a65" stroke-width="1.200"/><path d="M10.300 10.500v10" stroke="#989090" stroke-width="1.500"/><path d="M16 10.500v10" stroke="#989898" stroke-width="1.500"/><path d="M16 21v2.500" stroke="#646464" stroke-width="1.200"/><rect x="16.500" y="1" width="6.300" height="6.300" rx="1" fill="#757060"/><path d="M19.600 1.800v4.700M17.500 3l4.200 2.400M17.500 5.400l4.200-2.400" stroke="#a0a09a" stroke-width=".7"/><rect x=".8" y="16.500" width="6.800" height="6.800" rx="1" fill="#7d6f6f"/><path d="M2.700 18.400l3 3M5.700 18.400l-3 3" stroke="#a8a3a3" stroke-width="1.200"/></symbol>
    <symbol id="cut" viewBox="0 0 24 24"><path d="M1.500 8C1.200 4 4 1.700 10.500 2.500L9.500 10.500c-2 .3-3.500 2-5.500 1.300C2.300 11.200 1.600 9.800 1.500 8z" fill="#878787" stroke="#666a66" stroke-width=".8"/><path d="M14.500 3.300C18 3 21 1.500 22 4.500c.5 2 .5 4-.2 5.800-.8 2.300-4 2-6.300.7z" fill="#7e837e" stroke="#666a66" stroke-width=".8"/><path d="M16.500 2L9.700 16.500M10 2.500L15 16" stroke="#8f8f8f" stroke-width="1.200"/><g fill="none" stroke="#735f5f" stroke-width="1"><ellipse cx="8.500" cy="19.500" rx="2" ry="3.500" transform="rotate(25 8.500 19.500)"/><ellipse cx="17" cy="19.500" rx="2" ry="3.500" transform="rotate(-25 17 19.500)"/></g></symbol>
    <symbol id="merge" viewBox="0 0 24 24"><use href="#blob" fill="#7e837e"/><path d="M8.500 3.500c2-1 5 0 6 1M8.500 6c2-1 5 0 6 1M8.500 8.500c2-1 5 0 6 1M6 12c0 5 4 5 7 9" fill="none" stroke="#5e5e5e" stroke-width="1"/></symbol>
    <symbol id="mergeatt" viewBox="0 0 24 24"><g fill="#8e8e8e" stroke="#7c7c7c" stroke-width=".5"><rect x="2" y="2" width="9" height="5"/><rect x="13" y="2" width="9" height="5"/><rect x="2" y="9.500" width="9" height="5"/><rect x="13" y="9.500" width="9" height="5"/><rect x="2" y="17" width="9" height="5"/><rect x="13" y="17" width="9" height="5"/></g><path d="M8 5c1-2.500 7-2.500 8 0M8 12.500c1-2.500 7-2.500 8 0M8 20c1-2.500 7-2.500 8 0" fill="none" stroke="#555" stroke-width=".9"/></symbol>
    <symbol id="rotsym" viewBox="0 0 24 24"><path d="M12 2l8 5.500-8 4.500z" fill="#7e837e" stroke="#606460" stroke-width=".8"/><path d="M12 13.500l5.300 8.500H6.700z" fill="#747474" stroke="#858585" stroke-width=".8"/><path d="M6.500 18.500C1 14.500 2 6 9 3.500M6 2.500l4 .5-.5 4" fill="none" stroke="#5c5c5c" stroke-width="1"/></symbol>

    <!-- Panel icons -->
    <symbol id="addsel" viewBox="0 0 24 24"><rect x="2" y="2" width="16" height="15.500" fill="#eee" stroke="#9a9a90" stroke-width=".8"/><rect x="13.700" y="13.700" width="8.500" height="8.500" rx="1" fill="#5a8c5a"/><path d="M18 15.200v5.500M15.200 18h5.500" stroke="#fff" stroke-width="1.500"/></symbol>
    <symbol id="funnel" viewBox="0 0 24 24"><path d="M2.500 4.500h19l-7.500 8v10L10.500 20v-7.500z" fill="#6d97c4" stroke="#3e5f8a" stroke-width=".7"/><rect x="2.700" y="2" width="18.600" height="3" fill="#fce94f" stroke="#8a7d2a" stroke-width=".5"/></symbol>
    <g id="treeG"><path d="M2 3.500h20" stroke="#888" stroke-width="1.200"/><path d="M3.500 4v16.500M3.500 10.500h5M3.500 18.500h5" stroke="#aaa" stroke-width="1.200"/><g fill="#fcc92f" stroke="#f57900" stroke-width="1.200"><rect x="8" y="8.500" width="3.200" height="3.200"/><rect x="8" y="16.700" width="3.200" height="3.200"/></g></g>
    <symbol id="collapse" viewBox="0 0 24 24"><use href="#treeG"/><path d="M16 1.500l6.300 7h-3.800V20.500h-5V8.500H9.700z" fill="#6d97c4" stroke="#3e5f8a" stroke-width=".8"/></symbol>
    <symbol id="expand" viewBox="0 0 24 24"><use href="#treeG"/><path d="M16 20.500l6.300-7h-3.800V2h-5v11.500H9.700z" fill="#6d97c4" stroke="#3e5f8a" stroke-width=".8"/></symbol>
    <symbol id="folder" viewBox="0 0 24 24"><path d="M2.200 3.200H11l2.500 2.500h8.300v15H2.200z" fill="#efefed" stroke="#888a85" stroke-width="1.400"/></symbol>
    <symbol id="folderlink" viewBox="0 0 24 24"><path d="M1.500 2.500h9.800l2.200 2.300h9V8H12l-2-1.500H1.500z" fill="#888a85"/><path d="M2.200 9.500H9l2.500 1.800h10.300v10H2.200z" fill="#efefed" stroke="#888a85" stroke-width="1.300"/></symbol>
    <symbol id="home" viewBox="0 0 24 24"><use href="#folder"/><path d="M6.500 13.500L12 8.500l5.500 5M8 12.800v5.700h8v-5.700" fill="none" stroke="#2e3436" stroke-width="1.400"/></symbol>
    <symbol id="fav" viewBox="0 0 24 24"><path d="M12 1l2.800 8.300h8.600l-7 5.200 2.700 8.500L12 17.800 4.900 23l2.700-8.500-7-5.200h8.600z" fill="#fff26b" stroke="#d8ab08" stroke-width="1"/></symbol>
    <symbol id="paint" viewBox="0 0 24 24"><path d="M6 3.800l10 3.200-2 5-9.500-3.500z" fill="url(#gFlag)"/><path d="M4.300 8.200L11 10.500 9.500 14.500 2.500 12.500z" fill="#6d97c4"/><path d="M2.300 12.500L10 14.500l2 6L.8 15.500z" fill="#ef2929"/><path d="M21.800 4.200L16 10" stroke="#9c6a1e" stroke-width="2.800" stroke-linecap="round"/><path d="M21.700 4.300L16 10" stroke="#d9a04a" stroke-width="1.700" stroke-linecap="round"/><path d="M12 10l5.500 4.500-4.700 6.200L6.800 15z" fill="#e8c893" stroke="#9c6a1e" stroke-width=".7"/><path d="M8.500 14l4.500 5M10 12.500l4.500 5" stroke="#c9a060" stroke-width=".5"/><path d="M12 10l2-1.500 1.800 1 1.500 1.500 1 1.800-1 2z" fill="#c98b35" stroke="#9c6a1e" stroke-width=".5"/></symbol>
    <g id="clipG"><path d="M1.500 10v12.300h12" fill="none" stroke="#888a85" stroke-width="1.300"/><rect x="5" y="6" width="13" height="12" fill="#efefed" stroke="#888a85"/><rect x="8.500" y="3" width="13.500" height="12" fill="#efefed" stroke="#888a85"/><path d="M11.500 6v8.500c0 2.500 4 2.500 4 0V2c0-1.600-2.500-1.600-2.500 0" fill="none" stroke="#3e5f8a" stroke-width="1.100"/></g>
    <symbol id="group" viewBox="0 0 24 24"><use href="#clipG"/></symbol>
    <symbol id="addgroup" viewBox="0 0 24 24"><use href="#clipG"/><rect x="14.500" y="14.500" width="9.500" height="9.500" rx="1" fill="#5a8c5a"/><path d="M19.200 16.200v6M16.200 19.200h6" stroke="#fff" stroke-width="1.700"/></symbol>
    <symbol id="eye" viewBox="0 0 24 24"><path d="M0 7.500c6-3.500 16-3.500 23 0" fill="none" stroke="#8a8a86" stroke-width=".8"/><path d="M1 13c5-7 16-7 21 0-5 6-16 6-21 0z" fill="#eee" stroke="#777" stroke-width=".4"/><circle cx="11.500" cy="12.500" r="5" fill="#7aa7dc" stroke="#2c5a8c" stroke-width=".6"/><circle cx="11.500" cy="12.300" r="2.300" fill="#111"/><circle cx="10.500" cy="11" r="1" fill="#fff"/></symbol>
    <symbol id="epsf" viewBox="0 0 24 24"><path d="M11.500 4c-.8-3-7.800-2.500-7.100 1 .3 1.600 1.800 2.200 3.800 2.200-3.300.3-5.500 1.500-5.300 4 .3 3.600 8 3.500 9.200-.3" fill="none" stroke="#5c3566" stroke-width="1.900" stroke-linecap="round"/><rect x="13" y="13" width="11" height="11" rx="2" fill="#8f8f8f"/><path d="M14 14.500h9L20 19v5h-3v-5z" fill="#f2f2f2"/></symbol>
    <symbol id="raster" viewBox="0 0 24 24"><rect x="2" y="2" width="20" height="20" fill="#adc8e6"/><path d="M2 2h6.700v6.600H2zM15.300 2H22v6.600h-6.700zM8.700 8.600h6.600v6.700H8.700zM2 15.300h6.700V22H2z" fill="#2b3b4e"/></symbol>
    <symbol id="close" viewBox="0 0 24 24"><rect x="1.500" y="1.500" width="21" height="21" rx="6" fill="none" stroke="#3a3a3a" stroke-width="2"/><path d="M5.500 6l13 12.500M18.500 6l-13 12.500" stroke="#303030" stroke-width="4"/></symbol>
    <symbol id="check" viewBox="0 0 24 24"><path d="M4.500 12.500l5 6.500L20 3.500" fill="none" stroke="#2c2c2c" stroke-width="2.600"/></symbol>
    <symbol id="label" viewBox="0 0 24 24"><path d="M1.200 12l3.500-5.600h18.200v11.500H4.700z" fill="#fceb6a" stroke="#c4a000" stroke-width="1.100"/><text x="6.300" y="14.800" font-family="DejaVu Sans" font-size="7" fill="#111" stroke="#111" stroke-width=".2">abc</text></symbol>
    <symbol id="mask" viewBox="0 0 24 24"><text x="2.600" y="15.800" font-family="Inter" font-size="10.500" font-weight="bold" fill="#2e3436" stroke="#eef2ff" stroke-width="4.500" stroke-linejoin="round" paint-order="stroke">abc</text></symbol>
    <symbol id="cube" viewBox="0 0 24 24"><path d="M12 1l9.500 5.500L12 12.500 2.500 6.500z" fill="#f58a8a" stroke="#a40000"/><path d="M2 8.500l9.500 5.500v9L2 17.500z" fill="#8ae234" stroke="#4e9a06"/><path d="M22 8.500L12.500 14v9L22 17.500z" fill="#fce94f" stroke="#c4a000"/></symbol>
    <symbol id="brushes" viewBox="0 0 24 24"><g stroke="#9c6a1e" stroke-width=".4"><rect x="10.800" y="8" width="2.400" height="11.500" rx="1" fill="#d9a04a"/><rect x="4.500" y="4" width="2.200" height="12" rx="1" fill="#d9a04a"/><rect x="17.300" y="4" width="2.200" height="12" rx="1" fill="#d9a04a"/><path d="M7.500 6.500h9c0 2.500-2.500 2-3 3h-3c-.5-1-3-.5-3-3zM1 16c0-2 3.500-1.500 3.500-2.500h2.200c0 1 3.800.5 3.800 2.500zM13.800 16c0-2 3.500-1.500 3.500-2.500h2.200c0 1 3.700.5 3.700 2.500z" fill="#c98b35"/></g><rect x="7.500" y=".8" width="9" height="6" fill="#ef5555"/><rect x="1" y="16.500" width="9.500" height="6" fill="#fce04a"/><rect x="13.700" y="16.500" width="9.500" height="6" fill="#7fb0e8"/></symbol>
    <path id="uarrow" d="M1 8.500L9.500 1.500v4c7 0 12 3 12 9.500 0 4-2.500 7-7 7.500h-2v-5.500h4c.2-3.500-2.500-5-7-5v4z"/>
    <symbol id="undo" viewBox="0 0 24 24"><use href="#uarrow" fill="#ea8438" stroke="#c8641e" stroke-width=".7"/></symbol>
    <symbol id="redo" viewBox="0 0 24 24"><g transform="matrix(-1 0 0 1 24 0)"><use href="#uarrow" fill="#85c490" stroke="#4f8f5a" stroke-width=".8"/></g></symbol>
    <symbol id="history" viewBox="0 0 24 24"><g transform="matrix(-.6 0 0 .55 15.400 .300)"><use href="#uarrow" fill="#7fb98a" stroke="#4f8f5a"/></g><g transform="matrix(.6 0 0 .55 9.400 8.500)"><use href="#uarrow" fill="#ea8438" stroke="#c05a14"/></g></symbol>
    <symbol id="left" viewBox="0 0 24 24"><path d="M20 1.500v21L3.500 12z" fill="#6d97c4" stroke="#3e5f8a" stroke-width="1.200"/><path d="M18.500 3.500L5.500 12" stroke="#cfe0f2" stroke-width="1"/></symbol>
    <symbol id="up" viewBox="0 0 24 24"><path d="M12 2.500l10.500 17h-21z" fill="#6d97c4" stroke="#3e5f8a" stroke-width="1.200"/><path d="M12 4.500L3.500 18.500" stroke="#cfe0f2" stroke-width="1"/></symbol>
    <symbol id="down" viewBox="0 0 24 24"><path d="M12 20.500l10.500-17h-21z" fill="#6d97c4" stroke="#3e5f8a" stroke-width="1.200"/><path d="M12 18.500L3.500 4.500" stroke="#cfe0f2" stroke-width="1"/></symbol>
    <symbol id="plus" viewBox="0 0 28 28"><path d="M9 1h10v8h8v10h-8v8H9v-8H1V9h8z" fill="#fff" stroke="#4e8a50" stroke-width="2"/><path d="M14 4v20M4 14h20" stroke="#4e8a50" stroke-width="4"/></symbol>
    <symbol id="minus" viewBox="0 0 28 28"><rect x="1" y="9" width="26" height="10" fill="#fff" stroke="#ef4040" stroke-width="2"/><rect x="4" y="12" width="20" height="4" fill="#ef4040"/></symbol>
    <symbol id="updn" viewBox="0 0 10 32"><path d="M5 1.500l4 7H1zM5 30.500l4-7H1z" fill="#b1b1b1"/></symbol>
  </defs>
</svg>

<div class="flex flex-col w-[2180px] h-[1402px] rounded-[20px] overflow-hidden bg-[#727272] text-[#111] text-[25.7px] leading-none font-['Inter',sans-serif]">

  <!-- Title bar -->
  <header class="relative h-[53px] shrink-0 bg-[#f1eeec] border-b border-[#4a4e4a] flex items-center pl-4 gap-4 pb-[4px]">
    <i class="size-6 rounded-full bg-[#ff5f57] border border-[#e2463f]"></i>
    <i class="size-6 rounded-full bg-[#febc2e] border border-[#e0a028]"></i>
    <i class="size-6 rounded-full bg-[#28c840] border border-[#1fa832]"></i>
    <div class="flex-1 text-center font-bold text-[#484644] text-[26px] pr-[135px] tracking-[0.2px] -mt-px">*Untitled Project — QGIS</div>
  </header>

  <!-- Toolbars -->
  <div class="h-[76px] shrink-0 flex items-center pl-[7px] [&>svg]:w-[68px] [&>svg]:h-12 [&>svg]:shrink-0">
    <i class="w-[3px] h-[19px] rounded-full bg-[#b8b8b8] border-r border-[#555]"></i>
    <svg><use href="#new"/></svg><svg><use href="#open"/></svg><svg><use href="#save"/></svg><svg><use href="#newlayout"/></svg><svg><use href="#manager"/></svg><svg><use href="#style"/></svg>
    <i class="w-[3px] h-[19px] ml-[13px] rounded-full bg-[#b8b8b8] border-r border-[#555]"></i>
    <div class="w-[66px] h-[66px] rounded-[6px] border-2 border-white grid place-items-center ml-[2px]"><svg class="size-12"><use href="#hand"/></svg></div>
    <svg class="ml-px"><use href="#pan"/></svg><svg><use href="#zoomin"/></svg><svg><use href="#zoomout"/></svg><svg><use href="#zoomfull"/></svg><svg><use href="#zoomsel"/></svg><svg><use href="#zoomlayer"/></svg><svg><use href="#zoomnative"/></svg><svg><use href="#zoomlast"/></svg><svg><use href="#zoomnext"/></svg><svg><use href="#newmap"/></svg><svg><use href="#new3d"/></svg><svg><use href="#newbm"/></svg><svg><use href="#bms"/></svg><svg><use href="#clock"/></svg><svg><use href="#refresh"/></svg>
    <i class="w-[3px] h-[19px] ml-[46px] rounded-full bg-[#b8b8b8] border-r border-[#555]"></i>
    <svg class="-ml-px"><use href="#identify"/></svg><svg><use href="#abacus"/></svg><svg><use href="#gear"/></svg><svg><use href="#sigma"/></svg><svg><use href="#table"/></svg>
    <i class="w-2 h-2 mx-[7px] bg-[#b0b0b0] [clip-path:polygon(0_0,100%_0,50%_100%)]"></i>
    <svg><use href="#measure"/></svg>
    <i class="w-2 h-2 ml-[8px] mr-[11px] bg-[#b0b0b0] [clip-path:polygon(0_0,100%_0,50%_100%)]"></i>
    <div class="w-[66px] h-[66px] rounded-[6px] border-2 border-white grid place-items-center"><svg class="size-12 -ml-[2px]"><use href="#tips"/></svg></div>
    <span class="ml-auto pr-[7px] text-[20px] text-[#333] -mt-1">»</span>
  </div>
  <div class="h-[78px] shrink-0 flex items-center pl-[7px] [&>svg]:w-[68px] [&>svg]:h-12 [&>svg]:shrink-0">
    <i class="w-[3px] h-[19px] rounded-full bg-[#b8b8b8] border-r border-[#555]"></i>
    <svg><use href="#dsm"/></svg><svg><use href="#gpkg"/></svg><svg><use href="#shp"/></svg><svg><use href="#feather"/></svg><svg><use href="#mem"/></svg><svg><use href="#mesh"/></svg><svg><use href="#gpx"/></svg>
    <i class="w-[3px] h-[19px] ml-[13px] rounded-full bg-[#b8b8b8] border-r border-[#555]"></i>
    <svg><use href="#pencils"/></svg>
    <i class="w-2 h-2 -ml-[13px] mr-[5px] mt-9 bg-[#a0a0a0] [clip-path:polygon(0_0,100%_0,50%_100%)]"></i>
    <svg><use href="#pencil"/></svg><svg><use href="#saveedit"/></svg><svg><use href="#line"/></svg>
    <i class="w-2 h-2 mx-[7px] bg-[#999] [clip-path:polygon(0_0,100%_0,50%_100%)]"></i>
    <svg><use href="#addpts"/></svg><svg><use href="#vertex"/></svg>
    <i class="w-2 h-2 mx-[8px] bg-[#999] [clip-path:polygon(0_0,100%_0,50%_100%)]"></i>
    <svg><use href="#multi"/></svg>
    <span class="w-[92px] pl-[68px] text-[20px] text-[#333] -mt-1">»</span>
    <i class="w-[3px] h-[19px] ml-[4px] rounded-full bg-[#b8b8b8] border-r border-[#555]"></i>
    <svg class="-ml-px"><use href="#select"/></svg>
    <i class="w-2 h-2 mx-[8px] bg-[#b0b0b0] [clip-path:polygon(0_0,100%_0,50%_100%)]"></i>
    <svg><use href="#selexp"/></svg>
    <i class="w-2 h-2 mx-[8px] bg-[#b0b0b0] [clip-path:polygon(0_0,100%_0,50%_100%)]"></i>
    <svg><use href="#desel"/></svg>
    <i class="w-2 h-2 mx-[8px] bg-[#b0b0b0] [clip-path:polygon(0_0,100%_0,50%_100%)]"></i>
    <svg><use href="#selloc"/></svg>
  </div>
  <div class="h-[83px] pb-[5px] shrink-0 flex items-center pl-[7px] [&>svg]:w-[68px] [&>svg]:h-12 [&>svg]:shrink-0">
    <i class="w-[3px] h-[19px] rounded-full bg-[#b8b8b8] border-r border-[#555]"></i>
    <svg><use href="#tri"/></svg><svg><use href="#movef"/></svg>
    <i class="w-2 h-2 ml-[7px] mr-[9px] bg-[#999] [clip-path:polygon(0_0,100%_0,50%_100%)]"></i>
    <svg><use href="#rot"/></svg><svg><use href="#scale"/></svg><svg><use href="#simp"/></svg><svg><use href="#ring"/></svg><svg><use href="#part"/></svg><svg><use href="#fill"/></svg><svg><use href="#delring"/></svg><svg><use href="#delpart"/></svg><svg><use href="#reshape"/></svg><svg><use href="#offset"/></svg><svg><use href="#revl"/></svg><svg><use href="#trim"/></svg><svg><use href="#cut"/></svg><svg><use href="#cut"/></svg><svg><use href="#merge"/></svg><svg><use href="#mergeatt"/></svg><svg><use href="#rotsym"/></svg>
    <i class="w-2 h-2 ml-[7px] bg-[#999] [clip-path:polygon(0_0,100%_0,50%_100%)]"></i>
  </div>

  <div class="flex h-[1054px] shrink-0">
    <!-- Left docks -->
    <aside class="w-[454px] shrink-0 flex flex-col">
      <div class="h-[28px] flex items-center text-[22px]"><span class="w-[411px] pr-[23px] text-center">Browser</span><svg class="size-[22px] -mt-1"><use href="#close"/></svg></div>
      <div class="h-[68px] flex items-center pl-1 [&>svg]:w-[52px] [&>svg]:h-8"><svg><use href="#addsel"/></svg><svg><use href="#refresh"/></svg><svg><use href="#funnel"/></svg><svg><use href="#collapse"/></svg><svg class="p-[2px]"><use href="#info"/></svg></div>
      <div class="ml-[2px] w-[434px] h-[348px] rounded-[5px] border-2 border-[#383838] bg-[#b1b1b1] p-[2px] flex flex-col">
        <div class="flex h-[324px]">
          <div class="flex-1 overflow-hidden whitespace-nowrap [&>div]:h-9 [&>div]:flex [&>div]:items-center [&>div]:pl-[11px] [&_svg]:size-8 [&_svg]:mr-3 [&_svg]:shrink-0">
            <div><i class="w-[10px] h-[10px] mr-[17px] shrink-0 bg-[#6a6a6a] [clip-path:polygon(0_0,100%_50%,0_100%)]"></i><svg><use href="#folder"/></svg>/Volumes</div>
            <div><i class="w-[10px] h-[10px] mr-[17px] shrink-0 bg-[#6a6a6a] [clip-path:polygon(0_0,100%_0,50%_100%)]"></i><svg><use href="#fav"/></svg>Favorites</div>
            <div><i class="w-[10px] h-[10px] ml-8 mr-[17px] shrink-0 bg-[#6a6a6a] [clip-path:polygon(0_0,100%_50%,0_100%)]"></i><svg><use href="#folderlink"/></svg>/Users/ujavalgandhi/Dow</div>
            <div><i class="w-[10px] h-[10px] ml-8 mr-[17px] shrink-0 bg-[#6a6a6a] [clip-path:polygon(0_0,100%_50%,0_100%)]"></i><svg><use href="#folder"/></svg>/Users/ujavalgandhi/Goo</div>
            <div><i class="w-[10px] h-[10px] mr-[17px] shrink-0 bg-[#6a6a6a] [clip-path:polygon(0_0,100%_50%,0_100%)]"></i><svg><use href="#bms"/></svg>Spatial Bookmarks</div>
            <div><i class="w-[10px] h-[10px] mr-[17px] shrink-0 bg-[#6a6a6a] [clip-path:polygon(0_0,100%_50%,0_100%)]"></i><svg><use href="#home"/></svg>Home</div>
            <div><i class="w-[10px] h-[10px] mr-[17px] shrink-0 bg-[#6a6a6a] [clip-path:polygon(0_0,100%_50%,0_100%)]"></i><svg><use href="#folder"/></svg>/ (Macintosh HD)</div>
            <div><i class="w-[10px] h-[10px] mr-[17px] shrink-0 bg-[#6a6a6a] [clip-path:polygon(0_0,100%_50%,0_100%)]"></i><svg viewBox="0 0 24 24"><use href="#gpkgp"/></svg>GeoPackage</div>
            <div><i class="w-[10px] mr-[17px] shrink-0"></i><svg viewBox="0 0 24 24"><use href="#featherp"/></svg>SpatiaLite</div>
          </div>
          <div class="w-4 h-[324px] rounded-[4px] bg-[#383838]"><div class="h-[124px] rounded-[4px] bg-[#727272] border-2 border-[#383838]"></div></div>
        </div>
        <div class="w-[410px] h-4 rounded-[4px] bg-[#383838]"><div class="w-[210px] h-4 rounded-[4px] bg-[#727272] border-2 border-[#383838]"></div></div>
      </div>
      <div class="h-[56px] pt-[8px] flex items-center text-[22px]"><span class="w-[411px] pr-[23px] text-center">Layers</span><svg class="size-[22px] -mt-1"><use href="#close"/></svg></div>
      <div class="h-[50px] flex items-center pl-[6px] [&>svg]:w-[52px] [&>svg]:h-[30px] [&>svg]:shrink-0">
        <div class="w-[50px] h-[50px] shrink-0 rounded-[6px] border-2 border-white grid place-items-center"><svg class="size-[30px]"><use href="#paint"/></svg></div>
        <svg class="-ml-px"><use href="#addgroup"/></svg><svg><use href="#eye"/></svg>
        <i class="w-[9px] h-[9px] -ml-[13px] mr-[4px] mt-[22px] bg-[#b0b0b0] [clip-path:polygon(0_0,100%_0,50%_100%)]"></i>
        <svg><use href="#funnel"/></svg>
        <i class="w-[9px] h-[9px] -ml-[13px] mr-[4px] mt-[22px] bg-[#b0b0b0] [clip-path:polygon(0_0,100%_0,50%_100%)]"></i>
        <svg><use href="#epsf"/></svg>
        <i class="w-[9px] h-[9px] ml-[7px] mr-[10px] bg-[#b0b0b0] [clip-path:polygon(0_0,100%_0,50%_100%)]"></i>
        <svg><use href="#expand"/></svg><svg><use href="#collapse"/></svg>
        <span class="pl-[24px] text-[20px] text-[#333] -mt-1">»</span>
      </div>
      <div class="mt-[6px] ml-[1px] w-[437px] h-[498px] rounded-[4px] border-2 border-[#383838] bg-[#b1b1b1] p-px pt-[2px] flex flex-col">
        <div class="flex-1 whitespace-nowrap [&>div]:h-11 [&>div]:flex [&>div]:items-center [&_b]:size-[26px] [&_b]:shrink-0 [&_b]:rounded-[7px] [&_b]:border-2 [&_b]:border-[#383838] [&_b]:grid [&_b]:place-items-center">
          <div class="pl-[14px] tracking-[0.1px]"><i class="w-[12px] h-[11px] mr-[22px] bg-[#6a6a6a] [clip-path:polygon(0_0,100%_0,50%_100%)]"></i><b><svg class="size-[24px]"><use href="#check"/></svg></b><svg class="size-[28px] ml-4 mr-[14px]"><use href="#group"/></svg>sample_gps_track</div>
          <div class="pl-[88px] bg-[#efefef] font-bold tracking-[0.25px]"><b class="bg-[#b1b1b1]"><svg class="size-[24px]"><use href="#check"/></svg></b><span class="w-[58px] grid place-items-center"><i class="size-2 rounded-full bg-[#20e5de]"></i></span><span class="relative">track_points copy<i class="absolute left-0 right-0 top-[25px] h-[3px] bg-[#111]"></i></span></div>
          <div class="pl-[88px] font-bold tracking-[0.25px]"><b><svg class="size-[24px]"><use href="#check"/></svg></b><span class="w-[58px] grid place-items-center"><i class="size-[2px] rounded-full bg-[#8fb3cf]"></i></span>track_points</div>
          <div class="pl-[88px] font-bold tracking-[0.25px]"><b><svg class="size-[24px]"><use href="#check"/></svg></b><span class="w-[58px] grid place-items-center"><i class="w-8 h-[2px] bg-[#87a0af]"></i></span>tracks</div>
          <div class="pl-[14px] font-bold"><i class="w-[12px] h-[11px] mr-[22px] bg-[#6a6a6a] [clip-path:polygon(0_0,100%_0,50%_100%)]"></i><b><svg class="size-[24px]"><use href="#check"/></svg></b><svg class="size-[31px] ml-[15px] mr-[12px] shrink-0"><use href="#raster"/></svg>Dark Matter [no label...</div>
        </div>
        <div class="w-[430px] h-4 rounded-[4px] bg-[#383838] mb-[2px]"><div class="w-[425px] h-4 rounded-[4px] bg-[#727272] border-2 border-[#383838]"></div></div>
      </div>
    </aside>

    <!-- Map canvas -->
    <main class="w-[800px] h-[1050px] shrink-0 bg-[#090909] overflow-hidden">
      <svg class="w-[800px] h-[1050px] [&_path]:[vector-effect:non-scaling-stroke]" viewBox="0 0 800 1050" fill="none">
        <defs>
          <filter id="glow" x="-10%" y="-10%" width="120%" height="120%"><feGaussianBlur stdDeviation="6"/></filter>
          <pattern id="grid" width="83" height="71" patternUnits="userSpaceOnUse" patternTransform="rotate(9)"><path d="M0 9h52l8 6h23M11 9v40M34 6v65M62 15v38M34 38h49M0 52h34M48 38v33" stroke="#101010" stroke-width="1.500"/><path d="M15 14h5v6h-5zM40 46h6v5h-6zM66 22h4v9h-4zM26 60h6v4h-6zM54 24h4v5h-4z" fill="#050505"/></pattern>
          <pattern id="dense" width="41" height="33" patternUnits="userSpaceOnUse" patternTransform="rotate(-8)"><path d="M0 5h28l6 5h7M6 5v28M18 5v18M31 8v25M6 18h25M0 27h18" stroke="#111" stroke-width="1.500"/><path d="M9 8h4v5H9zM22 22h5v4h-5z" fill="#040404"/></pattern>
          <!-- Upper half -->
          <g id="upMinor" transform="scale(.5165 .34435) translate(-8 0)">
            <path d="M1020 410L590 690M520 735L335 845M1420 140L1556 60" stroke="#1b1b1b" stroke-width="3"/>
            <path d="M10 60L50 400 55 480M130 1130L125 1000M530 0l15 80M710 0l-50 140M790 0c60 60 80 130 80 180v60M1000 80l100 90M750 230l20 290M560 420l130-30v-90l60-5M370 520l90 50 100-20 210-120M30 550l60-80 60-30 50-120M60 400l90-10M260 200l-90 20-10 80M600 1010l110-10 130 20M330 1010l260 20M130 1130l80 0 100-10M420 1000l10-90M490 1100V880M750 1330l-10-90M320 1360l110 20 120 10M340 1460l0-80M760 1420l300 10M900 1250l10 150M1170 1260l-30 300M1300 200l-30 300M1360 300l-100 50M1380 540l-60 400M1460 400l-50 380M1390 840l60 120M1190 1000l160 50M1130 1120l200 60M1500 180l40 40M0 1370l80-40 130-20M0 1500l120 30M20 1460h120M1100 40l-50 90-60 90-40 50 30 20 30-40M1250 0l-20 60 140 30" stroke="#131313" stroke-width="2"/>
          </g>
          <g id="upMed" transform="scale(.5165 .34435) translate(-8 0)">
            <path d="M330 0L285 270 215 580 180 790 160 840 70 920 8 970M445 95l100 20 80 40 100 30 120 60 20 45 90 45 50 10 90 75 85 110 40 70 30 80v150M1030 380L1410 150 1435 0M1408 150V320M1556 360l-120-35-40 5-270 160-110 65-50 60-50 80-20 70-10 170-20 290M690 710l20-60 110-75 140 25M8 680h90l30-20 60-75 50 5 60 40 60 25 160 40 50 0 70-15 70 10 190 50 210 25 90-25 70 0 40 20 290 15M8 590l30 70M515 715v120h60L1000 920l185 45 80 10 60 55 60 45M505 890V740M505 890l-170-25-60 15L8 1040M515 750l60-45M690 715l-20 140-60 180-10 120-10 180-25 140-10 230M860 1180l-10 50-110 260M1160 540h90v210M1230 770l-10 110-50 110-60 210-25 120-30 240M1330 1005h50l5-35 40-10M1450 960l60 90 46 20M1530 710h26M1556 1180l-60 160-90 228M270 1467l290 10 180 20 250 35 566 40M890 1520v48" />
          </g>
          <g id="upBig" transform="scale(.5165 .34435) translate(-8 0)"><path d="M460 0L345 370 290 630 270 690 265 800 285 1110M1556 450l-55 320-60 210-60 180-45 130" /></g>
          <!-- Lower half -->
          <g id="loMinor" transform="translate(-4.130 540) scale(.5165 .36483)">
            <path d="M280 110l60 60 180-90M350 560l-40 80 20 60 420 30M330 530l80-40M540 490l-20 220M640 570l-60 140M820 310l10 260 60-20M860 540l50 110M700 900l120-30M490 830l90-10M820 1040l180-20M780 1000l-70 170M0 1200l60 30 40 90M430 1190l-30 190M590 1190l-40 100 30 90M1000 1210l60 90M1556 330l-100 200M1440 330l100 200M1100 400l-160 30-10 120M1250 1320l130-90 80-20M1180 720l80 260M1210 80l90 170M1380 60l160 140M0 880l60-40M40 700l80 200M630 60v160M10 60l80 80M20 300h130M50 400l80-30" stroke="#131313" stroke-width="2"/>
          </g>
          <g id="loMed" transform="translate(-4.130 540) scale(.5165 .36483)">
            <path d="M555 0v200M885 0l-5 240M8 125l50 25 40 45 60 30 90 40 5 45 60 20M1240 80l70 5 90-15 80-35h76M1410 0l-20 60M1550 45l-35 60-5 80-40 40-8 45M1300 85l8 420 20 80 30 110 20 50 10 140 30 110 30 90v200M1190 305l130-5 110-15 120-10M1290 330h-20v100l-20 50 5 35M1305 350h-20M1280 510v-70h25M1190 580l35-5 5-60 80 3M1110 655l240-50 206-25M1375 715l181-40M680 300l-10 140 45 90 35 160 30 240 55 280M750 730l-65 70-55 75M590 940l50 130 25 110 40 120 30 97M1130 655l15 320 10 230-100 192M1015 1095l270-12M1145 1235h175M1556 620l-50 360-15 130-30 200 60 87M1490 1120l66-8M8 500l60 130 60 100 120 170M8 785l120-40M8 1370l100 27M960 1300l-30 90" />
          </g>
          <g id="loBig" transform="translate(-4.130 540) scale(.5165 .36483)"><path d="M180 410L280 650l10 80-30 200-60 190-60 277M1165 350L1030 1010 930 1397M8 1090l200 30 240 45 240 35 130 12 70 0 85-25M760 705l110-25 140 0 30 10h40M1020 1020l180-5 90-5 80-30 186-13"/></g>
        </defs>
        <path d="M0 100h70l10 100-20 70H0z" fill="#050505"/>
        <path d="M640 0h160v440L540 400 480 180z" fill="url(#grid)"/><path d="M340 200l250-60 50 180-300 0z" fill="url(#grid)"/>
        <path d="M650 250h110l-40 90-80-10zM700 360h100v160l-130-60z" fill="url(#dense)"/>
        <path d="M0 560l110 20-30 60-80 0zM50 740l90 80-20 110-110-100z" fill="url(#dense)"/>
        <path d="M640 560h160v490H560l70-200z" fill="url(#grid)"/><path d="M660 570h130v60h-120zM620 780h140v90l-150 20zM620 940h110l-20 100-100-40z" fill="url(#dense)"/>
        <path d="M120 480h480l40 60-40 90-200-20-250 50-60-20z" fill="url(#grid)"/>
        <path d="M225 145l6 6-4 5-6-4zM236 156l16 6 14 6-3 6-20-8-9-5zM290 150l8-6 6 4-8 28-8 8-6-3 6-12zM270 170l8 4-4 14-6-2z" fill="#030303"/>
        <use href="#upMinor"/><use href="#loMinor"/>
        <g stroke="#1d1d1d" stroke-linejoin="round">
          <g stroke-width="9.500"><use href="#upMed"/><use href="#loMed"/></g>
          <g stroke-width="15"><use href="#upBig"/><use href="#loBig"/></g>
        </g>
        <g stroke="#050505" stroke-linejoin="round">
          <g stroke-width="5.500"><use href="#upMed"/><use href="#loMed"/></g>
          <g stroke-width="10.500"><use href="#upBig"/><use href="#loBig"/></g>
        </g>
        <g fill="#272727">
          <path d="M62 168q10-4 16 0-4 4-2 8t-4 16q-8 2-10 8-2 12-10 15-8 7-15 4 2-6 8-6 6-4 3-10-6-6-14-10-6-4-4-10 6-6 12-7 8-2 12-2 6 0 8-6z"/>
          <path d="M663 242q10-3 24-4-1 12-7 17 0 8-4 10-6 0-7-8-8-6-6-15zM618 240q6 2 12 6-2 8-8 12l-5 3q1-10 1-21zM664 221q4-1 7 0l-1 7q-4 1-6-1zM654 235q5-1 6 1l-1 5q-4 0-5-3zM372 450q6-3 14-1v7q-6 3-14 1zM568 566q8-5 13-2 5 4 4 9-8 5-13 3-7-4-4-10zM158 627q8-5 18-4 0 6-5 8-7 4-11 2zM288 836q8-1 15 5l-4 12q-4-8-11-17zM668 960q6-12 13-15 1 10-3 14-4 7-8 7zM562 1030q10-6 24-6 6 8 3 14-2 10-10 9-12-8-17-17z"/>
        </g>
        <path d="M8 885C60 875 80 860 112 845M157 812L335 650M404 624L440 610M462 598L530 575 590 548" stroke="#222" stroke-width="2.500" stroke-dasharray="5 5"/>
        <g stroke-linejoin="round" stroke-linecap="round">
          <path d="M143 384L157 382 184 381 213 386 301 404 357 411.500 430 418 512 425 595 430.500 673 456 812 515M143 384Q137 388 135.500 396L125 468 117 516 113 540 102 591 84 631 80 675 86 679 166 671Q180 667 218 646L290 627.500 373 640 461 642 604 654 609 637 616 606 641 536Q655 500 675 462" stroke="#d8d8d8" stroke-opacity=".62" stroke-width="24" filter="url(#glow)"/>
          <path d="M143 384L157 382 184 381 213 386 301 404 357 411.500 430 418 512 425 595 430.500 673 456 812 515M143 384Q137 388 135.500 396L125 468 117 516 113 540 102 591 84 631 80 675 86 679 166 671Q180 667 218 646L290 627.500 373 640 461 642 604 654 609 637 616 606 641 536Q655 500 675 462" stroke="#20e5de" stroke-width="13"/>
          <path d="M143 384L157 382 184 381 213 386 301 404 357 411.500 430 418 512 425 595 430.500 673 456M143 384Q137 388 135.500 396L125 468 117 516 113 540 102 591 84 631 80 675 86 679 166 671Q180 667 218 646L290 627.500 373 640 461 642 604 654 609 637" stroke="#20e5de" stroke-width="16" stroke-dasharray="0 9"/>
          <path d="M670 455L812 515M595 430.500L673 456" stroke="#20e5de" stroke-width="17"/>
          <path d="M609 637v0M84 623v0" stroke="#20e5de" stroke-width="18"/>
        </g>
      </svg>
    </main>

    <!-- Layer styling dock -->
    <aside class="flex-1 flex flex-col">
      <div class="h-[28px] flex items-center text-[22px]"><span class="w-[901px] pr-[9px] text-center">Layer Styling</span><svg class="size-[22px] -mt-1"><use href="#close"/></svg></div>
      <div class="mt-3 ml-6 w-[896px] h-12 rounded-[5px] border-2 border-[#1f1f1f] bg-linear-to-b from-[#525252] to-[#373737] text-[#b1b1b1] flex items-center pl-2 pr-[10px] pt-[2px]">
        <svg class="w-[30px] h-[30px] mr-[12px] -mt-[2px]" viewBox="0 0 30 30" fill="#ddd" stroke="#8a8a85" stroke-width="2"><circle cx="8.500" cy="9.500" r="2"/><circle cx="22.500" cy="4" r="2"/><circle cx="4.500" cy="23.500" r="2"/></svg>
        <span class="tracking-[0.1px]">track_points copy</span><i class="ml-auto w-2 h-2 bg-[#b1b1b1] [clip-path:polygon(0_0,100%_0,50%_100%)]"></i>
      </div>
      <div class="mt-[14px] flex">
        <nav class="ml-[26px] w-[76px] h-[942px] rounded-[4px] bg-[#383838] px-1 pt-1 flex flex-col [&>svg]:w-[68px] [&>svg]:h-[48px] [&>svg]:shrink-0">
          <div class="h-[60px] bg-[#f0f0f0] grid place-items-center"><svg class="size-[48px]"><use href="#paint"/></svg></div>
          <svg class="mt-[6px]"><use href="#label"/></svg>
          <svg class="mt-[10px]"><use href="#mask"/></svg>
          <svg class="mt-[14px]"><use href="#cube"/></svg>
          <svg class="mt-[12px]"><use href="#brushes"/></svg>
          <svg class="mt-[14px]"><use href="#history"/></svg>
        </nav>
        <section class="flex-1 -mt-[2px]">
          <div class="flex items-center pl-2 h-[50px]"><span class="w-[50px] h-[50px] rounded-[5px] border-2 border-[#383838] bg-linear-to-b from-[#9d9d9d] to-[#858585] grid place-items-center"><svg class="size-[28px]"><use href="#left"/></svg></span><span class="ml-[26px] tracking-[0.1px]">Effects Properties</span></div>

          <div class="flex mt-4">
            <div class="w-[224px] mt-3 h-[224px] grid place-items-center"><i class="size-[82px] rounded-full bg-[#ff6464] border-2 border-[#ff1414] shadow-[0_0_20px_5px_rgba(255,255,255,0.5)]"></i></div>
            <div class="relative mt-3 w-[454px] h-[224px] rounded-[4px] border-2 border-[#383838] bg-[#b1b1b1] p-[2px] text-[23.700px] [&>div]:h-[30px] [&>div]:flex [&>div]:items-center [&>div]:gap-[12px] [&>div]:pl-[6px] [&_b]:size-7 [&_b]:rounded-[8px] [&_b]:border-2 [&_b]:border-[#383838] [&_b]:grid [&_b]:place-items-center">
              <div><b></b>Inner Glow</div>
              <div><b></b>Inner Shadow</div>
              <div><b><svg class="size-[25px]"><use href="#check"/></svg></b>Source</div>
              <div class="bg-[#f0f0f0]"><b class="bg-[#b1b1b1]"><svg class="size-[25px]"><use href="#check"/></svg></b>Outer Glow</div>
              <div><b></b>Drop Shadow</div>
              <span class="absolute -left-[3px] top-[79px] w-[204px] h-[56px] rounded-[3px] border-[6px] border-[#ff3270]"></span>
            </div>
            <div class="ml-3 grid grid-cols-[56px_56px] grid-rows-[48px_48px] gap-x-3 gap-y-2 content-start [&>span]:rounded-[5px] [&>span]:border-2 [&>span]:border-[#383838] [&>span]:bg-linear-to-b [&>span]:from-[#9d9d9d] [&>span]:to-[#858585] [&>span]:grid [&>span]:place-items-center [&_svg]:size-7">
              <span><svg><use href="#plus"/></svg></span><span><svg><use href="#up"/></svg></span>
              <span><svg><use href="#minus"/></svg></span><span><svg><use href="#down"/></svg></span>
            </div>
          </div>

          <div class="flex items-center mt-[50px] pl-[26px] h-12"><span class="w-[144px] pt-px whitespace-nowrap">Effect type</span><div class="w-[638px] h-12 rounded-[5px] border-2 border-[#1f1f1f] bg-linear-to-b from-[#525252] to-[#373737] text-[#b1b1b1] flex items-center pt-px pl-[6px] pr-[9px]">Outer Glow<i class="ml-auto w-2 h-2 bg-[#b1b1b1] [clip-path:polygon(0_0,100%_0,50%_100%)]"></i></div></div>

          <div class="relative mt-7 ml-12 w-[738px] grid grid-cols-[192px_546px] gap-y-3 items-center [&>span]:whitespace-nowrap [&>span]:pt-px">
            <span>Spread</span>
            <div class="flex justify-between text-[#b1b1b1] [&>div]:h-12 [&>div]:rounded-[5px] [&>div]:border-2 [&>div]:border-[#1f1f1f] [&>div]:bg-linear-to-b [&>div]:from-[#525252] [&>div]:to-[#373737] [&>div]:flex [&>div]:items-center [&>div]:justify-between"><div class="w-[326px] pl-[8px] pr-2">2.0000<svg class="w-[10px] h-8"><use href="#updn"/></svg></div><div class="w-[208px] pt-px pl-[6px] pr-[9px]">Millimeters<i class="w-2 h-2 bg-[#b1b1b1] [clip-path:polygon(0_0,100%_0,50%_100%)]"></i></div></div>
            <span>Blur radius</span>
            <div class="flex justify-between text-[#b1b1b1] [&>div]:h-12 [&>div]:rounded-[5px] [&>div]:border-2 [&>div]:bg-linear-to-b [&>div]:from-[#525252] [&>div]:to-[#373737] [&>div]:flex [&>div]:items-center [&>div]:justify-between"><div class="w-[326px] pl-[8px] pr-2 border-[#d0d0d0]"><span class="flex items-center">2<i class="w-0 h-[30px] border-l-2 -ml-[2px] border-[#b1b1b1]"></i>.0000</span><svg class="w-[10px] h-8"><use href="#updn"/></svg></div><div class="w-[208px] pt-px pl-[6px] pr-[9px] border-[#1f1f1f]">Millimeters<i class="w-2 h-2 bg-[#b1b1b1] [clip-path:polygon(0_0,100%_0,50%_100%)]"></i></div></div>
            <span>Opacity</span>
            <div class="flex items-center h-12">
              <div class="ml-[2px] -mt-[3px] w-[336px] h-4 rounded-[4px] bg-[#383838] flex items-center"><div class="w-[146px] h-4 rounded-l-[4px] bg-[#b1b1b1] border-2 border-[#383838]"></div><div class="w-[46px] h-5 rounded-[3px] border-2 border-[#383838] bg-linear-to-b from-[#a0a0a0] to-[#8a8a8a]"></div></div>
              <div class="ml-2 w-[200px] h-12 rounded-[5px] border-2 border-[#1f1f1f] bg-linear-to-b from-[#525252] to-[#373737] text-[#b1b1b1] flex items-center pl-[8px] pr-[8px]"><span class="tracking-[0.2px]">50.0 %</span><svg class="w-[26px] h-5 ml-auto mr-[26px]" viewBox="0 0 26 20"><path d="M7 0h19v20H7L0 10z" fill="#b1b1b1"/><path d="M9.500 4l11 12M20.500 4l-11 12" stroke="#fff" stroke-width="2.500"/></svg><svg class="w-[10px] h-8"><use href="#updn"/></svg></div>
            </div>
            <span class="flex items-center -ml-[6px]"><i class="size-[26px] rounded-full border-2 border-[#383838] bg-[#b1b1b1] grid place-items-center mr-[14px] -mt-[2px]"><i class="size-3 rounded-full bg-[#333]"></i></i>Single color</span>
            <div class="h-14 rounded-[5px] border-2 border-[#2c2c2c] bg-linear-to-b from-[#525252] to-[#373737] flex items-center pl-[4px] pr-[7px]"><i class="w-[510px] h-8 bg-white"></i><i class="ml-auto w-2 h-2 bg-[#b1b1b1] [clip-path:polygon(0_0,100%_0,50%_100%)]"></i></div>
            <span class="flex items-center -ml-[6px]"><i class="size-[26px] rounded-full border-2 border-[#383838] bg-[#b1b1b1] mr-[14px] -mt-[2px]"></i>Color ramp</span>
            <div class="h-14 rounded-[5px] border-2 border-[#444] flex items-center pr-[7px]"><i class="ml-auto w-2 h-2 bg-[#8e8e8e] [clip-path:polygon(0_0,100%_0,50%_100%)]"></i></div>
            <span>Blend mode</span>
            <div class="h-12 rounded-[5px] border-2 border-[#1f1f1f] bg-linear-to-b from-[#525252] to-[#373737] text-[#b1b1b1] flex items-center pt-px pl-[6px] pr-[9px]">Normal<i class="ml-auto w-2 h-2 bg-[#b1b1b1] [clip-path:polygon(0_0,100%_0,50%_100%)]"></i></div>
            <span>Draw mode</span>
            <div class="h-12 rounded-[5px] border-2 border-[#1f1f1f] bg-linear-to-b from-[#525252] to-[#373737] text-[#b1b1b1] flex items-center pt-px pl-[6px] pr-[9px]">Render and modify<i class="ml-auto w-2 h-2 bg-[#b1b1b1] [clip-path:polygon(0_0,100%_0,50%_100%)]"></i></div>
            <b class="absolute -left-4 -top-[13px] w-[553px] h-[133px] rounded-[3px] border-[6px] border-[#ff3270]"></b>
          </div>

          <div class="flex items-center mt-[44px] pl-2 pr-[6px] h-[50px]">
            <span class="w-[50px] h-[50px] rounded-[5px] border-2 border-[#383838] bg-linear-to-b from-[#9d9d9d] to-[#858585] grid place-items-center"><svg class="size-[26px]"><use href="#undo"/></svg></span>
            <span class="ml-3 w-[50px] h-[50px] rounded-[5px] border-2 border-[#383838] bg-linear-to-b from-[#9d9d9d] to-[#858585] grid place-items-center"><svg class="size-[26px]"><use href="#redo"/></svg></span>
            <b class="ml-auto size-[26px] rounded-[7px] border-2 border-[#383838] bg-[#b1b1b1] grid place-items-center"><svg class="size-[24px]"><use href="#check"/></svg></b>
            <span class="ml-[14px] w-[142px] pt-px whitespace-nowrap">Live update</span>
            <span class="ml-[14px] w-[86px] h-12 -mt-[2px] rounded-[5px] border-2 border-[#383838] bg-linear-to-b from-[#9d9d9d] to-[#858585] grid place-items-center">Apply</span>
          </div>
        </section>
      </div>
    </aside>
  </div>

  <!-- Status bar -->
  <footer class="h-[58px] pt-[2px] shrink-0 flex items-center text-[22px] whitespace-nowrap">
    <div class="ml-2 w-[428px] h-12 shrink-0 rounded-[5px] border-2 border-[#383838] bg-[#b1b1b1] flex items-center text-[#5d5d5d] text-[25.500px]"><svg class="size-[28px] ml-[14px] mr-[18px]" viewBox="0 0 28 28" fill="none" stroke="#8d8d8d" stroke-width="2.500"><circle cx="12" cy="12" r="9"/><path d="M19 19l6.500 6.500"/></svg><span class="pt-px">Type to locate (⌘K)</span></div>
    <div class="ml-[69px] w-[95px] shrink-0 overflow-hidden flex justify-center py-1 pt-[6px]">Coordinate</div>
    <div class="ml-[8px] w-[235px] h-11 shrink-0 rounded-[5px] border-2 border-[#383838] bg-[#b1b1b1] flex items-center pl-3 pt-px text-[22.500px] tracking-[0.2px]">23.0648°,72.5008°</div>
    <svg class="ml-[6px] w-[34px] h-[34px] shrink-0" viewBox="0 0 32 32"><g transform="rotate(-25 16 16)" stroke="#111" stroke-width="2.200" fill="#eee"><rect x="9" y="1" width="13" height="18" rx="6"/><path d="M13.500 4v10M17.500 4v10" stroke-width="2.800"/><circle cx="16" cy="23" r="7"/><circle cx="16" cy="23" r="2.200"/></g><path d="M1 19h3M24 3h4M26 7h4M28 1h2" stroke="#111" stroke-width="1.800"/></svg>
    <div class="ml-[31px] w-[33px] shrink-0 overflow-hidden flex justify-center py-1 pt-[6px]"><span>Scale</span></div>
    <div class="ml-[9px] w-[171px] h-12 shrink-0 rounded-[5px] border-2 border-[#383838] bg-[#b1b1b1] flex items-center pl-2 pr-px pt-px justify-between"><span>1:55752</span><span class="w-[28px] h-[41px] rounded-[3px] bg-linear-to-b from-[#525252] to-[#373737] grid place-items-center"><i class="w-2 h-2 bg-[#b1b1b1] [clip-path:polygon(0_0,100%_0,50%_100%)]"></i></span></div>
    <svg class="ml-[23px] w-[25px] h-[30px] shrink-0" viewBox="0 0 25 30"><path d="M6 15V9c0-9 13-9 13 0v6" fill="none" stroke="#d8d8d8" stroke-width="3"/><rect x=".5" y="14" width="24" height="15" rx="2" fill="#5e5e5e"/></svg>
    <div class="ml-[22px] w-[78px] shrink-0 overflow-hidden flex justify-center py-1 pt-[6px]">Magnifier</div>
    <div class="ml-[8px] w-[185px] h-12 shrink-0 rounded-[5px] border-2 border-[#1f1f1f] bg-linear-to-b from-[#525252] to-[#373737] text-[#b1b1b1] flex items-center justify-between pl-2 pr-2 pt-px">100%<svg class="w-[10px] h-8"><use href="#updn"/></svg></div>
    <div class="ml-[20px] w-[66px] shrink-0 overflow-hidden flex justify-center py-1 pt-[6px]">Rotation</div>
    <div class="ml-[21px] w-[185px] h-12 shrink-0 rounded-[5px] border-2 border-[#1f1f1f] bg-linear-to-b from-[#525252] to-[#373737] text-[#b1b1b1] flex items-center justify-between pl-2 pr-2 pt-px">0.0 °<svg class="w-[10px] h-8"><use href="#updn"/></svg></div>
    <b class="ml-[14px] size-[26px] shrink-0 rounded-[7px] border-2 border-[#383838] bg-[#b1b1b1] grid place-items-center"><svg class="size-[24px]"><use href="#check"/></svg></b>
    <span class="ml-[14px] w-[75px] pt-[2px]">Render</span>
    <svg class="ml-[26px] size-[30px] shrink-0" viewBox="0 0 28 28" fill="none" stroke="#d5d5d5"><path d="M3 10a11.500 10.500 0 1 1 22 0q1 5-4 10l-3 3h-8l-3-3q-5-5-4-10z" fill="#8a8a8a" stroke-width="0"/><ellipse cx="14" cy="12" rx="5" ry="10.500" stroke-width="1.300"/><path d="M14 1.500v21M2.800 12h22.400M5 6.500h18M5 17.500h18" stroke-width="1.500"/><ellipse cx="14" cy="12" rx="11" ry="10.500" stroke-width="1.500" stroke-dasharray="4 1"/><path d="M9 25h10M11 27.300h6" stroke-width="1.200"/></svg>
    <span class="ml-[5px] w-[122px] pt-[2px]">EPSG:4326</span>
    <svg class="ml-[43px] w-[34px] h-[32px] shrink-0" viewBox="0 0 34 32"><circle cx="17" cy="14" r="14" fill="#5f5f5f"/><path d="M18 26l12 6-2-11z" fill="#5f5f5f"/><g fill="#fff"><circle cx="9.500" cy="13" r="2.800"/><circle cx="17" cy="13" r="2.800"/><circle cx="24.500" cy="13" r="2.800"/></g></svg>
  </footer>
</div>
</body>
</html>
